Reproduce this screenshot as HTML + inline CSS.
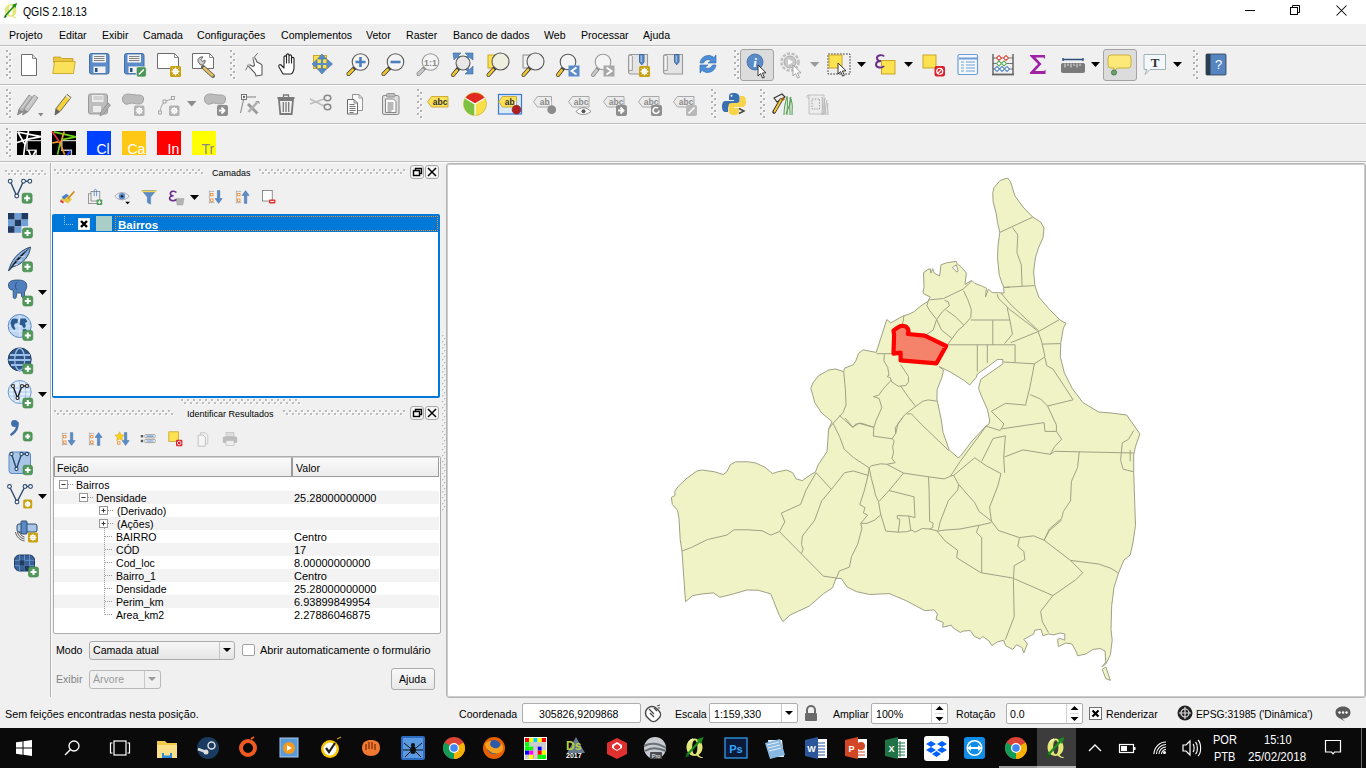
<!DOCTYPE html>
<html><head><meta charset="utf-8">
<style>
*{box-sizing:border-box}
html,body{margin:0;padding:0}
body{width:1366px;height:768px;overflow:hidden;position:relative;background:#f0f0f0;font-family:"Liberation Sans",sans-serif;font-size:11px;color:#000}
.a{position:absolute}
.t{position:absolute;white-space:pre;line-height:13px;font-size:11.5px;transform:scaleX(0.92);transform-origin:0 0}
.u{position:absolute;white-space:pre;line-height:13px}
</style></head><body>
<div class="a" style="left:0px;top:0px;width:1366px;height:24px;background:#fff"></div>
<svg class="a" style="left:3px;top:3px" width="16" height="16" viewBox="0 0 22 22"><path fill-rule="evenodd" d="M10.5 1.5c-4.5 0-8 3.8-8 8.7s3.5 8.7 8 8.7 8-3.8 8-8.7-3.5-8.7-8-8.7zM10.8 3.2c-1.6 0-2.6 3-2.6 7s1 7 2.6 7 2.6-3 2.6-7-1-7-2.6-7z" fill="#e2e676"/><path d="M12 17.5c1.5 2.5 4 3.8 6.5 3.5l.3-1c-2 .2-3.5-.8-4.5-2.8z" fill="#e2e676"/><path d="M4.5 6c.8-2 2.5-3.5 4.5-4" stroke="#f6f8c0" stroke-width="1.3" fill="none"/><path d="M3 18L16 3.5" stroke="#1c8c1c" stroke-width="2.2"/><path d="M19.5 0L12.5 2.5 17 7z" fill="#1c8c1c"/><path d="M1 20.5l4.5-1.2-2.8-2.6z" fill="#135a13"/></svg>
<div class="t" style="left:23px;top:5px;font-size:12px;line-height:14px;transform:scaleX(0.87)">QGIS 2.18.13</div>
<svg class="a" style="left:1244px;top:4px" width="14" height="14" viewBox="0 0 14 14" ><path d="M1 6.5h10" stroke="#000" stroke-width="1"/></svg>
<svg class="a" style="left:1289px;top:4px" width="14" height="14" viewBox="0 0 14 14" ><rect x="1.5" y="3.5" width="7" height="7" fill="none" stroke="#000"/><path d="M3.5 3.5v-2h7v7h-2" fill="none" stroke="#000"/></svg>
<svg class="a" style="left:1335px;top:4px" width="14" height="14" viewBox="0 0 14 14" ><path d="M1.5 1.5l10 10M11.5 1.5l-10 10" stroke="#000" stroke-width="1.05"/></svg>
<div class="t" style="left:9px;top:29px;">Projeto</div>
<div class="t" style="left:59px;top:29px;">Editar</div>
<div class="t" style="left:102px;top:29px;">Exibir</div>
<div class="t" style="left:143px;top:29px;">Camada</div>
<div class="t" style="left:197px;top:29px;">Configurações</div>
<div class="t" style="left:281px;top:29px;">Complementos</div>
<div class="t" style="left:366px;top:29px;">Vetor</div>
<div class="t" style="left:406px;top:29px;">Raster</div>
<div class="t" style="left:453px;top:29px;">Banco de dados</div>
<div class="t" style="left:544px;top:29px;">Web</div>
<div class="t" style="left:581px;top:29px;">Processar</div>
<div class="t" style="left:643px;top:29px;">Ajuda</div>
<div class="a" style="left:0px;top:45px;width:1366px;height:1px;background:#bdbdbd"></div>
<div class="a" style="left:0px;top:46px;width:1366px;height:1px;background:#fcfcfc"></div>
<div class="a" style="left:0px;top:84px;width:1366px;height:1px;background:#bdbdbd"></div>
<div class="a" style="left:0px;top:85px;width:1366px;height:1px;background:#fcfcfc"></div>
<div class="a" style="left:0px;top:123px;width:1366px;height:1px;background:#bdbdbd"></div>
<div class="a" style="left:0px;top:124px;width:1366px;height:1px;background:#fcfcfc"></div>
<div class="a" style="left:0px;top:161px;width:1366px;height:1px;background:#bdbdbd"></div>
<div class="a" style="left:0px;top:162px;width:1366px;height:1px;background:#fcfcfc"></div>
<svg class="a" style="left:6px;top:50px" width="7" height="32" viewBox="0 0 7 32" ><rect x="1" y="1" width="2" height="2" fill="#fdfdfd"/><rect x="0" y="0" width="2" height="2" fill="#b2b2b2"/><rect x="4" y="4" width="2" height="2" fill="#fdfdfd"/><rect x="3" y="3" width="2" height="2" fill="#b2b2b2"/><rect x="1" y="7" width="2" height="2" fill="#fdfdfd"/><rect x="0" y="6" width="2" height="2" fill="#b2b2b2"/><rect x="4" y="10" width="2" height="2" fill="#fdfdfd"/><rect x="3" y="9" width="2" height="2" fill="#b2b2b2"/><rect x="1" y="13" width="2" height="2" fill="#fdfdfd"/><rect x="0" y="12" width="2" height="2" fill="#b2b2b2"/><rect x="4" y="16" width="2" height="2" fill="#fdfdfd"/><rect x="3" y="15" width="2" height="2" fill="#b2b2b2"/><rect x="1" y="19" width="2" height="2" fill="#fdfdfd"/><rect x="0" y="18" width="2" height="2" fill="#b2b2b2"/><rect x="4" y="22" width="2" height="2" fill="#fdfdfd"/><rect x="3" y="21" width="2" height="2" fill="#b2b2b2"/><rect x="1" y="25" width="2" height="2" fill="#fdfdfd"/><rect x="0" y="24" width="2" height="2" fill="#b2b2b2"/><rect x="4" y="28" width="2" height="2" fill="#fdfdfd"/><rect x="3" y="27" width="2" height="2" fill="#b2b2b2"/></svg>
<svg class="a" style="left:230px;top:50px" width="7" height="32" viewBox="0 0 7 32" ><rect x="1" y="1" width="2" height="2" fill="#fdfdfd"/><rect x="0" y="0" width="2" height="2" fill="#b2b2b2"/><rect x="4" y="4" width="2" height="2" fill="#fdfdfd"/><rect x="3" y="3" width="2" height="2" fill="#b2b2b2"/><rect x="1" y="7" width="2" height="2" fill="#fdfdfd"/><rect x="0" y="6" width="2" height="2" fill="#b2b2b2"/><rect x="4" y="10" width="2" height="2" fill="#fdfdfd"/><rect x="3" y="9" width="2" height="2" fill="#b2b2b2"/><rect x="1" y="13" width="2" height="2" fill="#fdfdfd"/><rect x="0" y="12" width="2" height="2" fill="#b2b2b2"/><rect x="4" y="16" width="2" height="2" fill="#fdfdfd"/><rect x="3" y="15" width="2" height="2" fill="#b2b2b2"/><rect x="1" y="19" width="2" height="2" fill="#fdfdfd"/><rect x="0" y="18" width="2" height="2" fill="#b2b2b2"/><rect x="4" y="22" width="2" height="2" fill="#fdfdfd"/><rect x="3" y="21" width="2" height="2" fill="#b2b2b2"/><rect x="1" y="25" width="2" height="2" fill="#fdfdfd"/><rect x="0" y="24" width="2" height="2" fill="#b2b2b2"/><rect x="4" y="28" width="2" height="2" fill="#fdfdfd"/><rect x="3" y="27" width="2" height="2" fill="#b2b2b2"/></svg>
<svg class="a" style="left:734px;top:50px" width="7" height="32" viewBox="0 0 7 32" ><rect x="1" y="1" width="2" height="2" fill="#fdfdfd"/><rect x="0" y="0" width="2" height="2" fill="#b2b2b2"/><rect x="4" y="4" width="2" height="2" fill="#fdfdfd"/><rect x="3" y="3" width="2" height="2" fill="#b2b2b2"/><rect x="1" y="7" width="2" height="2" fill="#fdfdfd"/><rect x="0" y="6" width="2" height="2" fill="#b2b2b2"/><rect x="4" y="10" width="2" height="2" fill="#fdfdfd"/><rect x="3" y="9" width="2" height="2" fill="#b2b2b2"/><rect x="1" y="13" width="2" height="2" fill="#fdfdfd"/><rect x="0" y="12" width="2" height="2" fill="#b2b2b2"/><rect x="4" y="16" width="2" height="2" fill="#fdfdfd"/><rect x="3" y="15" width="2" height="2" fill="#b2b2b2"/><rect x="1" y="19" width="2" height="2" fill="#fdfdfd"/><rect x="0" y="18" width="2" height="2" fill="#b2b2b2"/><rect x="4" y="22" width="2" height="2" fill="#fdfdfd"/><rect x="3" y="21" width="2" height="2" fill="#b2b2b2"/><rect x="1" y="25" width="2" height="2" fill="#fdfdfd"/><rect x="0" y="24" width="2" height="2" fill="#b2b2b2"/><rect x="4" y="28" width="2" height="2" fill="#fdfdfd"/><rect x="3" y="27" width="2" height="2" fill="#b2b2b2"/></svg>
<svg class="a" style="left:1193px;top:50px" width="7" height="32" viewBox="0 0 7 32" ><rect x="1" y="1" width="2" height="2" fill="#fdfdfd"/><rect x="0" y="0" width="2" height="2" fill="#b2b2b2"/><rect x="4" y="4" width="2" height="2" fill="#fdfdfd"/><rect x="3" y="3" width="2" height="2" fill="#b2b2b2"/><rect x="1" y="7" width="2" height="2" fill="#fdfdfd"/><rect x="0" y="6" width="2" height="2" fill="#b2b2b2"/><rect x="4" y="10" width="2" height="2" fill="#fdfdfd"/><rect x="3" y="9" width="2" height="2" fill="#b2b2b2"/><rect x="1" y="13" width="2" height="2" fill="#fdfdfd"/><rect x="0" y="12" width="2" height="2" fill="#b2b2b2"/><rect x="4" y="16" width="2" height="2" fill="#fdfdfd"/><rect x="3" y="15" width="2" height="2" fill="#b2b2b2"/><rect x="1" y="19" width="2" height="2" fill="#fdfdfd"/><rect x="0" y="18" width="2" height="2" fill="#b2b2b2"/><rect x="4" y="22" width="2" height="2" fill="#fdfdfd"/><rect x="3" y="21" width="2" height="2" fill="#b2b2b2"/><rect x="1" y="25" width="2" height="2" fill="#fdfdfd"/><rect x="0" y="24" width="2" height="2" fill="#b2b2b2"/><rect x="4" y="28" width="2" height="2" fill="#fdfdfd"/><rect x="3" y="27" width="2" height="2" fill="#b2b2b2"/></svg>
<svg class="a" style="left:6px;top:89px" width="7" height="32" viewBox="0 0 7 32" ><rect x="1" y="1" width="2" height="2" fill="#fdfdfd"/><rect x="0" y="0" width="2" height="2" fill="#b2b2b2"/><rect x="4" y="4" width="2" height="2" fill="#fdfdfd"/><rect x="3" y="3" width="2" height="2" fill="#b2b2b2"/><rect x="1" y="7" width="2" height="2" fill="#fdfdfd"/><rect x="0" y="6" width="2" height="2" fill="#b2b2b2"/><rect x="4" y="10" width="2" height="2" fill="#fdfdfd"/><rect x="3" y="9" width="2" height="2" fill="#b2b2b2"/><rect x="1" y="13" width="2" height="2" fill="#fdfdfd"/><rect x="0" y="12" width="2" height="2" fill="#b2b2b2"/><rect x="4" y="16" width="2" height="2" fill="#fdfdfd"/><rect x="3" y="15" width="2" height="2" fill="#b2b2b2"/><rect x="1" y="19" width="2" height="2" fill="#fdfdfd"/><rect x="0" y="18" width="2" height="2" fill="#b2b2b2"/><rect x="4" y="22" width="2" height="2" fill="#fdfdfd"/><rect x="3" y="21" width="2" height="2" fill="#b2b2b2"/><rect x="1" y="25" width="2" height="2" fill="#fdfdfd"/><rect x="0" y="24" width="2" height="2" fill="#b2b2b2"/><rect x="4" y="28" width="2" height="2" fill="#fdfdfd"/><rect x="3" y="27" width="2" height="2" fill="#b2b2b2"/></svg>
<svg class="a" style="left:417px;top:89px" width="7" height="32" viewBox="0 0 7 32" ><rect x="1" y="1" width="2" height="2" fill="#fdfdfd"/><rect x="0" y="0" width="2" height="2" fill="#b2b2b2"/><rect x="4" y="4" width="2" height="2" fill="#fdfdfd"/><rect x="3" y="3" width="2" height="2" fill="#b2b2b2"/><rect x="1" y="7" width="2" height="2" fill="#fdfdfd"/><rect x="0" y="6" width="2" height="2" fill="#b2b2b2"/><rect x="4" y="10" width="2" height="2" fill="#fdfdfd"/><rect x="3" y="9" width="2" height="2" fill="#b2b2b2"/><rect x="1" y="13" width="2" height="2" fill="#fdfdfd"/><rect x="0" y="12" width="2" height="2" fill="#b2b2b2"/><rect x="4" y="16" width="2" height="2" fill="#fdfdfd"/><rect x="3" y="15" width="2" height="2" fill="#b2b2b2"/><rect x="1" y="19" width="2" height="2" fill="#fdfdfd"/><rect x="0" y="18" width="2" height="2" fill="#b2b2b2"/><rect x="4" y="22" width="2" height="2" fill="#fdfdfd"/><rect x="3" y="21" width="2" height="2" fill="#b2b2b2"/><rect x="1" y="25" width="2" height="2" fill="#fdfdfd"/><rect x="0" y="24" width="2" height="2" fill="#b2b2b2"/><rect x="4" y="28" width="2" height="2" fill="#fdfdfd"/><rect x="3" y="27" width="2" height="2" fill="#b2b2b2"/></svg>
<svg class="a" style="left:711px;top:89px" width="7" height="32" viewBox="0 0 7 32" ><rect x="1" y="1" width="2" height="2" fill="#fdfdfd"/><rect x="0" y="0" width="2" height="2" fill="#b2b2b2"/><rect x="4" y="4" width="2" height="2" fill="#fdfdfd"/><rect x="3" y="3" width="2" height="2" fill="#b2b2b2"/><rect x="1" y="7" width="2" height="2" fill="#fdfdfd"/><rect x="0" y="6" width="2" height="2" fill="#b2b2b2"/><rect x="4" y="10" width="2" height="2" fill="#fdfdfd"/><rect x="3" y="9" width="2" height="2" fill="#b2b2b2"/><rect x="1" y="13" width="2" height="2" fill="#fdfdfd"/><rect x="0" y="12" width="2" height="2" fill="#b2b2b2"/><rect x="4" y="16" width="2" height="2" fill="#fdfdfd"/><rect x="3" y="15" width="2" height="2" fill="#b2b2b2"/><rect x="1" y="19" width="2" height="2" fill="#fdfdfd"/><rect x="0" y="18" width="2" height="2" fill="#b2b2b2"/><rect x="4" y="22" width="2" height="2" fill="#fdfdfd"/><rect x="3" y="21" width="2" height="2" fill="#b2b2b2"/><rect x="1" y="25" width="2" height="2" fill="#fdfdfd"/><rect x="0" y="24" width="2" height="2" fill="#b2b2b2"/><rect x="4" y="28" width="2" height="2" fill="#fdfdfd"/><rect x="3" y="27" width="2" height="2" fill="#b2b2b2"/></svg>
<svg class="a" style="left:760px;top:89px" width="7" height="32" viewBox="0 0 7 32" ><rect x="1" y="1" width="2" height="2" fill="#fdfdfd"/><rect x="0" y="0" width="2" height="2" fill="#b2b2b2"/><rect x="4" y="4" width="2" height="2" fill="#fdfdfd"/><rect x="3" y="3" width="2" height="2" fill="#b2b2b2"/><rect x="1" y="7" width="2" height="2" fill="#fdfdfd"/><rect x="0" y="6" width="2" height="2" fill="#b2b2b2"/><rect x="4" y="10" width="2" height="2" fill="#fdfdfd"/><rect x="3" y="9" width="2" height="2" fill="#b2b2b2"/><rect x="1" y="13" width="2" height="2" fill="#fdfdfd"/><rect x="0" y="12" width="2" height="2" fill="#b2b2b2"/><rect x="4" y="16" width="2" height="2" fill="#fdfdfd"/><rect x="3" y="15" width="2" height="2" fill="#b2b2b2"/><rect x="1" y="19" width="2" height="2" fill="#fdfdfd"/><rect x="0" y="18" width="2" height="2" fill="#b2b2b2"/><rect x="4" y="22" width="2" height="2" fill="#fdfdfd"/><rect x="3" y="21" width="2" height="2" fill="#b2b2b2"/><rect x="1" y="25" width="2" height="2" fill="#fdfdfd"/><rect x="0" y="24" width="2" height="2" fill="#b2b2b2"/><rect x="4" y="28" width="2" height="2" fill="#fdfdfd"/><rect x="3" y="27" width="2" height="2" fill="#b2b2b2"/></svg>
<svg class="a" style="left:6px;top:128px" width="7" height="32" viewBox="0 0 7 32" ><rect x="1" y="1" width="2" height="2" fill="#fdfdfd"/><rect x="0" y="0" width="2" height="2" fill="#b2b2b2"/><rect x="4" y="4" width="2" height="2" fill="#fdfdfd"/><rect x="3" y="3" width="2" height="2" fill="#b2b2b2"/><rect x="1" y="7" width="2" height="2" fill="#fdfdfd"/><rect x="0" y="6" width="2" height="2" fill="#b2b2b2"/><rect x="4" y="10" width="2" height="2" fill="#fdfdfd"/><rect x="3" y="9" width="2" height="2" fill="#b2b2b2"/><rect x="1" y="13" width="2" height="2" fill="#fdfdfd"/><rect x="0" y="12" width="2" height="2" fill="#b2b2b2"/><rect x="4" y="16" width="2" height="2" fill="#fdfdfd"/><rect x="3" y="15" width="2" height="2" fill="#b2b2b2"/><rect x="1" y="19" width="2" height="2" fill="#fdfdfd"/><rect x="0" y="18" width="2" height="2" fill="#b2b2b2"/><rect x="4" y="22" width="2" height="2" fill="#fdfdfd"/><rect x="3" y="21" width="2" height="2" fill="#b2b2b2"/><rect x="1" y="25" width="2" height="2" fill="#fdfdfd"/><rect x="0" y="24" width="2" height="2" fill="#b2b2b2"/><rect x="4" y="28" width="2" height="2" fill="#fdfdfd"/><rect x="3" y="27" width="2" height="2" fill="#b2b2b2"/></svg>
<svg class="a" style="left:17px;top:52px;overflow:visible" width="24" height="24" viewBox="0 0 24 24"><path d="M4.5 2.5H15.5L19.5 6.5V23.5H4.5Z" fill="#fff" stroke="#6e6e6e"/><path d="M15.5 2.5V6.5H19.5" fill="#ddd" stroke="#6e6e6e" stroke-width="0.8"/></svg>
<svg class="a" style="left:52px;top:52px;overflow:visible" width="24" height="24" viewBox="0 0 24 24"><path d="M1.5 5h7l1.5 1.5H21v4H1.5z" fill="#e8c83a" stroke="#c09a20" stroke-width="0.8"/><path d="M0.8 21.5L2.5 9.5H23.2L21.5 21.5z" fill="#fbe05a" stroke="#c9a52a" stroke-width="0.9"/></svg>
<svg class="a" style="left:87px;top:52px;overflow:visible" width="24" height="24" viewBox="0 0 24 24"><rect x="2.5" y="1.5" width="19.5" height="20.5" rx="2" fill="#5b8cc9" stroke="#3f6ea8"/><rect x="5.5" y="2.5" width="13.5" height="8" fill="#f2f2f2"/><path d="M7 4.5h10.5M7 6.5h10.5M7 8.5h10.5" stroke="#666" stroke-width="0.8"/><rect x="6.5" y="14.5" width="12" height="6.5" fill="#f0f0f0"/><rect x="8" y="16" width="2.5" height="4" fill="#2c4f86"/></svg>
<svg class="a" style="left:122px;top:52px;overflow:visible" width="24" height="24" viewBox="0 0 24 24"><rect x="2.5" y="1.5" width="19.5" height="20.5" rx="2" fill="#5b8cc9" stroke="#3f6ea8"/><rect x="5.5" y="2.5" width="13.5" height="8" fill="#f2f2f2"/><path d="M7 4.5h10.5M7 6.5h10.5M7 8.5h10.5" stroke="#666" stroke-width="0.8"/><rect x="6.5" y="14.5" width="12" height="6.5" fill="#f0f0f0"/><rect x="8" y="16" width="2.5" height="4" fill="#2c4f86"/><rect x="14.3" y="14.8" width="10" height="10.2" rx="2" fill="#4c9455" stroke="#fff" stroke-width="0.6"/><path d="M16.8 22.5l5-5" stroke="#fff" stroke-width="1.6"/></svg>
<svg class="a" style="left:157px;top:52px;overflow:visible" width="24" height="24" viewBox="0 0 24 24"><path d="M0.5 1.5H17.5L21.5 5.5V16.5H0.5Z" fill="#fff" stroke="#6e6e6e"/><path d="M17.5 1.5V5.5H21.5" fill="none" stroke="#6e6e6e" stroke-width="0.8"/><rect x="13" y="14" width="11" height="11" rx="1.5" fill="#c9a214"/><circle cx="18.5" cy="19.5" r="2.42" fill="none" stroke="#fff" stroke-width="1.2"/><path d="M18.5 15.5v8M14.5 19.5h8M15.5 16.5l6 6M21.5 16.5l-6 6" stroke="#fff" stroke-width="0.9"/></svg>
<svg class="a" style="left:192px;top:52px;overflow:visible" width="24" height="24" viewBox="0 0 24 24"><path d="M0.5 1.5H17.5L21.5 5.5V16.5H0.5Z" fill="#fff" stroke="#6e6e6e"/><path d="M17.5 1.5V5.5H21.5" fill="none" stroke="#6e6e6e" stroke-width="0.8"/><path d="M11 15L21 24" stroke="#5a5a5a" stroke-width="4" stroke-linecap="round"/><path d="M12 16L20.5 23.5" stroke="#e8c060" stroke-width="2.4" stroke-linecap="round"/><path d="M6 9.5a4 4 0 0 1 5-4.5l-2 2.5 1.5 2 2.5-1.5a4 4 0 0 1-4.5 5z" fill="#d0d0d0" stroke="#555" stroke-width="0.9"/></svg>
<svg class="a" style="left:242px;top:52px;overflow:visible" width="24" height="24" viewBox="0 0 24 24"><path d="M20 23V13.2L18.3 11.7 14.8 9.7 14 7.8 12.5 5.2 11 6 12.5 13.6 11 14.4 7 12.5 5.8 13.6 7.4 15.2 13.2 21.4 14 24z" fill="#fff" stroke="#5a5a5a" stroke-width="1.1" stroke-linejoin="round"/><path d="M15.6 1.1L11.7 5.8M6.6 12.8L3.5 18.3" stroke="#777" stroke-width="1"/><circle cx="11.7" cy="6.2" r="1.3" fill="#bbb"/><circle cx="6.8" cy="13" r="1.3" fill="#bbb"/></svg>
<svg class="a" style="left:276px;top:52px;overflow:visible" width="24" height="24" viewBox="0 0 24 24"><path d="M7 22l-4-7c-1-2 1-3 2-2l3 3V5c0-1.5 2.5-1.5 2.5 0v6V3c0-1.5 2.5-1.5 2.5 0v8V4c0-1.5 2.5-1.5 2.5 0v7V6.5c0-1.5 2.5-1.5 2.5 0V16c0 3-2 6-3 6z" fill="#fff" stroke="#222" stroke-width="1.1" stroke-linejoin="round"/></svg>
<svg class="a" style="left:311px;top:52px;overflow:visible" width="24" height="24" viewBox="0 0 24 24"><rect x="2.5" y="3.5" width="13" height="13" fill="#fce24e" stroke="#c9a52a"/><path d="M11 7v10M6 12h10" stroke="#5a8cc8" stroke-width="2.2"/><path d="M11 2l-4.5 5h9zM11 22l-4.5-5h9zM1 12l5-4.5v9zM21.5 12l-5-4.5v9z" fill="#5a8cc8" stroke="#3d6ea8" stroke-width="0.6"/></svg>
<svg class="a" style="left:346px;top:52px;overflow:visible" width="24" height="24" viewBox="0 0 24 24"><path d="M2.5 22L8.631013716151655 15.868986283848345" stroke="#333" stroke-width="4" stroke-linecap="round"/><path d="M2.5 22L6.863246763185286 17.636753236814712" stroke="#f2c832" stroke-width="2.6" stroke-linecap="round"/><circle cx="14.5" cy="10" r="8.3" fill="#f4f4f4" stroke="#5a5a5a" stroke-width="1.1"/><path d="M14.5 5v10M9.5 10h10" stroke="#4d7fbf" stroke-width="2.6"/></svg>
<svg class="a" style="left:381px;top:52px;overflow:visible" width="24" height="24" viewBox="0 0 24 24"><path d="M2.5 22L8.631013716151655 15.868986283848345" stroke="#333" stroke-width="4" stroke-linecap="round"/><path d="M2.5 22L6.863246763185286 17.636753236814712" stroke="#f2c832" stroke-width="2.6" stroke-linecap="round"/><circle cx="14.5" cy="10" r="8.3" fill="#f4f4f4" stroke="#5a5a5a" stroke-width="1.1"/><path d="M9.5 10h10" stroke="#4d7fbf" stroke-width="2.6"/></svg>
<svg class="a" style="left:416px;top:52px;overflow:visible" width="24" height="24" viewBox="0 0 24 24"><path d="M2.5 22L8.631013716151655 15.868986283848345" stroke="#888" stroke-width="4" stroke-linecap="round"/><path d="M2.5 22L6.863246763185286 17.636753236814712" stroke="#c8c8c8" stroke-width="2.6" stroke-linecap="round"/><circle cx="14.5" cy="10" r="8.3" fill="#f4f4f4" stroke="#9a9a9a" stroke-width="1.1"/><text x="14.5" y="13.5" font-family="Liberation Sans" font-weight="bold" font-size="9" fill="#8a8a8a" text-anchor="middle">1:1</text></svg>
<svg class="a" style="left:451px;top:52px;overflow:visible" width="24" height="24" viewBox="0 0 24 24"><path d="M2 1h8l-2.5 2.5 3 3-2 2-3-3L3 8z M22 1h-8l2.5 2.5-3 3 2 2 3-3L22 8z M22 22h-8l2.5-2.5-3-3 2-2 3 3L22 14z" fill="#5a8cc8" stroke="#3d6ea8" stroke-width="0.6"/><path d="M2 23L7.51870920234864 16.37754895718163" stroke="#333" stroke-width="4" stroke-linecap="round"/><path d="M2 23L5.91824820318744 18.29810215617507" stroke="#f2c832" stroke-width="2.6" stroke-linecap="round"/><circle cx="12" cy="11" r="7" fill="#e8e8e8" stroke="#5a5a5a" stroke-width="1.1"/></svg>
<svg class="a" style="left:486px;top:52px;overflow:visible" width="24" height="24" viewBox="0 0 24 24"><rect x="2" y="3" width="8" height="13" fill="#fce24e" stroke="#c9a52a"/><path d="M2.5 23L8.852907369945683 15.852979208811108" stroke="#333" stroke-width="4" stroke-linecap="round"/><path d="M2.5 23L7.1919977728708835 17.721502505520256" stroke="#f2c832" stroke-width="2.6" stroke-linecap="round"/><circle cx="14.5" cy="9.5" r="8.5" fill="#efefe0" stroke="#5a5a5a" stroke-width="1.1"/></svg>
<svg class="a" style="left:521px;top:52px;overflow:visible" width="24" height="24" viewBox="0 0 24 24"><rect x="2" y="3" width="8" height="13" fill="#f0f0f0" stroke="#8a8a8a"/><path d="M2.5 23L8.852907369945683 15.852979208811108" stroke="#333" stroke-width="4" stroke-linecap="round"/><path d="M2.5 23L7.1919977728708835 17.721502505520256" stroke="#f2c832" stroke-width="2.6" stroke-linecap="round"/><circle cx="14.5" cy="9.5" r="8.5" fill="#f0f0f0" stroke="#5a5a5a" stroke-width="1.1"/></svg>
<svg class="a" style="left:556px;top:52px;overflow:visible" width="24" height="24" viewBox="0 0 24 24"><path d="M2 23L7.2442560653724 16.18246711501588" stroke="#333" stroke-width="4" stroke-linecap="round"/><path d="M2 23L5.719979163248169 18.164027087777377" stroke="#f2c832" stroke-width="2.6" stroke-linecap="round"/><circle cx="12" cy="10" r="7.8" fill="#f4f4f4" stroke="#5a5a5a" stroke-width="1.1"/><rect x="12.5" y="13.5" width="11" height="11" fill="#5b8cc9"/><path d="M20.5 15.5l-5 3.5 5 3.5" stroke="#fff" stroke-width="1.8" fill="none"/></svg>
<svg class="a" style="left:591px;top:52px;overflow:visible" width="24" height="24" viewBox="0 0 24 24"><path d="M2 23L7.2442560653724 16.18246711501588" stroke="#888" stroke-width="4" stroke-linecap="round"/><path d="M2 23L5.719979163248169 18.164027087777377" stroke="#c8c8c8" stroke-width="2.6" stroke-linecap="round"/><circle cx="12" cy="10" r="7.8" fill="#f4f4f4" stroke="#9a9a9a" stroke-width="1.1"/><rect x="12.5" y="13.5" width="11" height="11" fill="#a8a8a8"/><path d="M15.5 15.5l5 3.5-5 3.5" stroke="#fff" stroke-width="1.8" fill="none"/></svg>
<svg class="a" style="left:626px;top:52px;overflow:visible" width="24" height="24" viewBox="0 0 24 24"><path d="M4.5 2.5H21.5V22H5C3.5 22 2.5 21 2.5 19.5V4.5C2.5 3.3 3.3 2.5 4.5 2.5z" fill="#e4e4e4" stroke="#999" stroke-width="1.1"/><path d="M2.8 18.5V4.3C2.8 3 6.3 3 6.3 4.3V18.5" fill="#f6f6f6" stroke="#999" stroke-width="1"/><path d="M2.8 19.5C2.8 18.3 4 18.2 6.3 18.5" fill="none" stroke="#999" stroke-width="1"/><path d="M13.5 2.5H18V10L15.75 12.8 13.5 10z" fill="#5b8cc9" stroke="#3a6296" stroke-width="0.9"/><path d="M15.2 3.5V10" stroke="#c8dcf4" stroke-width="0.8"/><rect x="13" y="14" width="11" height="11" rx="1.5" fill="#c9a214"/><circle cx="18.5" cy="19.5" r="2.42" fill="none" stroke="#fff" stroke-width="1.2"/><path d="M18.5 15.5v8M14.5 19.5h8M15.5 16.5l6 6M21.5 16.5l-6 6" stroke="#fff" stroke-width="0.9"/></svg>
<svg class="a" style="left:661px;top:52px;overflow:visible" width="24" height="24" viewBox="0 0 24 24"><path d="M4.5 2.5H21.5V22H5C3.5 22 2.5 21 2.5 19.5V4.5C2.5 3.3 3.3 2.5 4.5 2.5z" fill="#e4e4e4" stroke="#999" stroke-width="1.1"/><path d="M2.8 18.5V4.3C2.8 3 6.3 3 6.3 4.3V18.5" fill="#f6f6f6" stroke="#999" stroke-width="1"/><path d="M2.8 19.5C2.8 18.3 4 18.2 6.3 18.5" fill="none" stroke="#999" stroke-width="1"/><path d="M13.5 2.5H18V10L15.75 12.8 13.5 10z" fill="#5b8cc9" stroke="#3a6296" stroke-width="0.9"/><path d="M15.2 3.5V10" stroke="#c8dcf4" stroke-width="0.8"/></svg>
<svg class="a" style="left:696px;top:52px;overflow:visible" width="24" height="24" viewBox="0 0 24 24"><path d="M4 11a8.5 8.5 0 0 1 14-5.5l2-2.5v8h-8l3-2.5a5 5 0 0 0-7.5 2.5z" fill="#4d8fd6" stroke="#2f6ab0" stroke-width="0.6"/><path d="M20 13a8.5 8.5 0 0 1-14 5.5l-2 2.5v-8h8l-3 2.5a5 5 0 0 0 7.5-2.5z" fill="#4d8fd6" stroke="#2f6ab0" stroke-width="0.6"/></svg>
<div class="a" style="left:740px;top:49px;width:34px;height:32px;background:#dcdcdc;border:1px solid #a3a3a3;border-radius:3px"></div>
<svg class="a" style="left:745px;top:52px;overflow:visible" width="24" height="24" viewBox="0 0 24 24"><circle cx="10" cy="10" r="8" fill="#5a8cc8" stroke="#3d6ea8" stroke-width="0.8"/><text x="10" y="15" font-family="Liberation Serif" font-style="italic" font-weight="bold" font-size="13" fill="#fff" text-anchor="middle">i</text><path d="M13 13l0 11 2.6-2.4 2 4.5 1.8-.8-2-4.3 3.6-.2z" fill="#fff" stroke="#222" stroke-width="0.9" stroke-linejoin="round"/></svg>
<svg class="a" style="left:780px;top:52px;overflow:visible" width="24" height="24" viewBox="0 0 24 24"><circle cx="10" cy="10" r="8.5" fill="none" stroke="#bdbdbd" stroke-width="2.5" stroke-dasharray="3 1.6"/><circle cx="10" cy="10" r="6" fill="#c8c8c8" stroke="#aaa"/><path d="M8 7v6l5-3z" fill="#fff"/><path d="M13 13l0 11 2.6-2.4 2 4.5 1.8-.8-2-4.3 3.6-.2z" fill="#fff" stroke="#9a9a9a" stroke-width="0.9" stroke-linejoin="round"/></svg>
<svg class="a" style="left:810px;top:62px" width="10" height="5" viewBox="0 0 10 5" ><path d="M0 0h9.5l-4.75 5z" fill="#9a9a9a"/></svg>
<svg class="a" style="left:827px;top:52px;overflow:visible" width="24" height="24" viewBox="0 0 24 24"><rect x="1" y="2" width="22" height="20" fill="none" stroke="#333" stroke-width="0.9" stroke-dasharray="1.8 1.2"/><rect x="2" y="3" width="13" height="13" fill="#fce24e" stroke="#c9a52a"/><path d="M11 11l0 11 2.6-2.4 2 4.5 1.8-.8-2-4.3 3.6-.2z" fill="#fff" stroke="#222" stroke-width="0.9" stroke-linejoin="round"/></svg>
<svg class="a" style="left:857px;top:62px" width="9" height="5" viewBox="0 0 9 5" ><path d="M0 0h9l-4.5 5z" fill="#000"/></svg>
<svg class="a" style="left:873px;top:52px;overflow:visible" width="24" height="24" viewBox="0 0 24 24"><rect x="8.5" y="8.5" width="13.5" height="13.5" fill="#fce24e" stroke="#c9a52a"/><path d="M11 4.5c-1-2-7-2-7 1.5 0 2 2 3 4 3-3 0-5 1.5-5 3.5 0 3.5 6 4 8 1.5" fill="none" stroke="#6b2e8a" stroke-width="2"/></svg>
<svg class="a" style="left:904px;top:62px" width="9" height="5" viewBox="0 0 9 5" ><path d="M0 0h9l-4.5 5z" fill="#000"/></svg>
<svg class="a" style="left:922px;top:52px;overflow:visible" width="24" height="24" viewBox="0 0 24 24"><rect x="1" y="3" width="13" height="13" fill="#fce24e" stroke="#c9a52a"/><rect x="12.5" y="14" width="10.5" height="10.5" rx="2" fill="#d9232e"/><circle cx="17.75" cy="19.25" r="3" fill="none" stroke="#fff" stroke-width="1.2"/><path d="M15.6 21.4l4.3-4.3" stroke="#fff" stroke-width="1.2"/></svg>
<svg class="a" style="left:956px;top:52px;overflow:visible" width="24" height="24" viewBox="0 0 24 24"><rect x="2" y="2.5" width="19.5" height="20" rx="1.5" fill="#f4f8fc" stroke="#6d9fd6" stroke-width="1.2"/><path d="M3 6.5h18" stroke="#6d9fd6" stroke-width="2"/><path d="M5 10h3M10 10h9M5 13h3M10 13h9M5 16h3M10 16h9M5 19h3M10 19h9" stroke="#6d9fd6" stroke-width="1.1"/></svg>
<svg class="a" style="left:991px;top:52px;overflow:visible" width="24" height="24" viewBox="0 0 24 24"><path d="M2 2v20M22 2v20" stroke="#555" stroke-width="1.3"/><path d="M1 22.5h22" stroke="#666" stroke-width="1.8"/><path d="M2 6h20M2 11.5h20M2 17h20" stroke="#555" stroke-width="0.8"/><path d="M5.5 6l2.5-2.5 2.5 2.5-2.5 2.5z" fill="#fff" stroke="#e05040" stroke-width="1.1"/><path d="M12.5 6l2.5-2.5 2.5 2.5-2.5 2.5z" fill="#fff" stroke="#e05040" stroke-width="1.1"/><path d="M5.5 11.5l2.5-2.5 2.5 2.5-2.5 2.5z" fill="#fff" stroke="#60b060" stroke-width="1.1"/><path d="M10.5 11.5l2.5-2.5 2.5 2.5-2.5 2.5z" fill="#fff" stroke="#60b060" stroke-width="1.1"/><path d="M3.5 17l2.5-2.5 2.5 2.5-2.5 2.5z" fill="#fff" stroke="#5a8cc8" stroke-width="1.1"/><path d="M8.5 17l2.5-2.5 2.5 2.5-2.5 2.5z" fill="#fff" stroke="#5a8cc8" stroke-width="1.1"/><path d="M13.5 17l2.5-2.5 2.5 2.5-2.5 2.5z" fill="#fff" stroke="#5a8cc8" stroke-width="1.1"/></svg>
<svg class="a" style="left:1026px;top:52px;overflow:visible" width="24" height="24" viewBox="0 0 24 24"><path d="M4 3h15v4l-1.5-1.5H9.5l6 6.5-6.5 7H18l1.5-1.5V22H4v-1.5l8-8.5-8-8z" fill="#a020a8"/></svg>
<svg class="a" style="left:1061px;top:52px;overflow:visible" width="24" height="24" viewBox="0 0 24 24"><path d="M1.5 7.5h21M2 6v3M22 6v3" stroke="#2d4f77" stroke-width="1.4"/><rect x="0.5" y="11.5" width="23" height="9" rx="1" fill="#7a7a7a" stroke="#555" stroke-width="0.6"/><path d="M4 11.5v4M7 11.5v2.5M10 11.5v4M13 11.5v2.5M16 11.5v4M19 11.5v2.5" stroke="#fff" stroke-width="0.8"/></svg>
<svg class="a" style="left:1091px;top:62px" width="9" height="5" viewBox="0 0 9 5" ><path d="M0 0h9l-4.5 5z" fill="#000"/></svg>
<div class="a" style="left:1103px;top:49px;width:34px;height:32px;background:#dcdcdc;border:1px solid #a3a3a3;border-radius:3px"></div>
<svg class="a" style="left:1108px;top:52px;overflow:visible" width="24" height="24" viewBox="0 0 24 24"><path d="M3 3h17a3 3 0 0 1 3 3v7a3 3 0 0 1-3 3H9l-3 4v-4H3a3 3 0 0 1-3-3V6a3 3 0 0 1 3-3z" fill="#fde87a" stroke="#c8aa30" stroke-width="0.9"/><circle cx="6" cy="20.5" r="2.6" fill="#6aa070" stroke="#3f7048" stroke-width="0.8"/></svg>
<svg class="a" style="left:1143px;top:52px;overflow:visible" width="24" height="24" viewBox="0 0 24 24"><path d="M1 2.5h21.5v15H7l-5 5 2-5H1z" fill="#f4f8fc" stroke="#9aa" stroke-width="0.9"/><text x="12" y="14.5" font-family="Liberation Serif" font-weight="bold" font-size="13" fill="#333" text-anchor="middle">T</text></svg>
<svg class="a" style="left:1173px;top:62px" width="9" height="5" viewBox="0 0 9 5" ><path d="M0 0h9l-4.5 5z" fill="#000"/></svg>
<svg class="a" style="left:1204px;top:52px;overflow:visible" width="24" height="24" viewBox="0 0 24 24"><rect x="2" y="2" width="20" height="21" rx="1" fill="#5585c0" stroke="#2a3a4a" stroke-width="0.8"/><rect x="2" y="2" width="4.5" height="21" fill="#2b3d50"/><text x="14.5" y="17" font-family="Liberation Sans" font-size="13" fill="#fff" text-anchor="middle">?</text></svg>
<svg class="a" style="left:17px;top:92px;overflow:visible" width="24" height="24" viewBox="0 0 24 24"><path d="M0.5 23l1.5-6 10-14 4 2.8-10 14z" fill="#b8b8b8" stroke="#8a8a8a" stroke-width="0.8"/><path d="M0.5 23l1.5-6 4 2.8z" fill="#8a8a8a"/><path d="M5 16l9-12.5" stroke="#ddd" stroke-width="0.8"/><path d="M5.5 23l1.5-6 10-14 4 2.8-10 14z" fill="#c4c4c4" stroke="#8a8a8a" stroke-width="0.8"/><path d="M5.5 23l1.5-6 4 2.8z" fill="#8a8a8a"/><path d="M10 16l9-12.5" stroke="#ddd" stroke-width="0.8"/></svg>
<svg class="a" style="left:38px;top:113px" width="6" height="4" viewBox="0 0 6 4" ><path d="M0 0h5.5l-2.75 3.5z" fill="#888"/></svg>
<svg class="a" style="left:51px;top:92px;overflow:visible" width="24" height="24" viewBox="0 0 24 24"><path d="M4 23l1-6.5 11-14 4 3-11 14z" fill="#f3d23a" stroke="#5a5a5a" stroke-width="0.9"/><path d="M4 23l1-6.5 4 3z" fill="#666"/><path d="M15 3.5l4 3" stroke="#eee" stroke-width="1.5"/></svg>
<svg class="a" style="left:87px;top:92px;overflow:visible" width="24" height="24" viewBox="0 0 24 24"><rect x="1.5" y="2" width="19" height="20" rx="2" fill="#bdbdbd" stroke="#9a9a9a"/><rect x="5" y="3" width="11.5" height="7" fill="#ececec"/><path d="M6.5 5h9M6.5 7h9" stroke="#aaa" stroke-width="0.8"/><rect x="6" y="14" width="8" height="6" fill="#ececec"/><path d="M13 24l1-4 7-9 2.5 2-7 9z" fill="#b0b0b0" stroke="#8a8a8a" stroke-width="0.8"/></svg>
<svg class="a" style="left:122px;top:92px;overflow:visible" width="24" height="24" viewBox="0 0 24 24"><path d="M0.5 7c0-4 3-5 6-5 3 0 5 1 8 1 4 0 7 0 7 4s-2 5-5 5-5-1-7-1-4 2-6 1-3-2-3-5z" fill="#bcbcbc" stroke="#9a9a9a" stroke-width="0.9"/><rect x="12" y="13.5" width="10.5" height="10.5" rx="1.5" fill="#b2b2b2"/><circle cx="17.25" cy="18.75" r="2.31" fill="none" stroke="#fff" stroke-width="1.2"/><path d="M17.25 15.0v7.5M13.5 18.75h7.5M14.5 16.0l5.5 5.5M20.0 16.0l-5.5 5.5" stroke="#fff" stroke-width="0.9"/></svg>
<svg class="a" style="left:158px;top:92px;overflow:visible" width="24" height="24" viewBox="0 0 24 24"><path d="M2 21c0-8 5-13 13-14" fill="none" stroke="#aaa" stroke-width="1.1"/><rect x="0.5" y="19" width="3" height="3" fill="#eee" stroke="#999" stroke-width="0.8"/><rect x="5" y="8" width="3" height="3" fill="#eee" stroke="#999" stroke-width="0.8"/><rect x="13.5" y="4.5" width="3" height="3" fill="#eee" stroke="#999" stroke-width="0.8"/><rect x="11" y="13.5" width="10.5" height="10.5" rx="1.5" fill="#b2b2b2"/><circle cx="16.25" cy="18.75" r="2.31" fill="none" stroke="#fff" stroke-width="1.2"/><path d="M16.25 15.0v7.5M12.5 18.75h7.5M13.5 16.0l5.5 5.5M19.0 16.0l-5.5 5.5" stroke="#fff" stroke-width="0.9"/></svg>
<svg class="a" style="left:187px;top:101px" width="10" height="6" viewBox="0 0 10 6" ><path d="M0 0h9.5l-4.75 5.5z" fill="#8a8a8a"/></svg>
<svg class="a" style="left:204px;top:92px;overflow:visible" width="24" height="24" viewBox="0 0 24 24"><path d="M0.5 7c0-4 3-5 6-5 3 0 5 1 8 1 4 0 7 0 7 4s-2 5-5 5-5-1-7-1-4 2-6 1-3-2-3-5z" fill="#bcbcbc" stroke="#9a9a9a" stroke-width="0.9"/><rect x="13" y="13" width="11" height="11" rx="2" fill="#8e8e8e"/><path d="M15 18.5h4.5M17.5 15.5l3 3-3 3" stroke="#fff" stroke-width="1.8" fill="none"/></svg>
<svg class="a" style="left:239px;top:92px;overflow:visible" width="24" height="24" viewBox="0 0 24 24"><rect x="2.5" y="2.5" width="5" height="5" fill="#fff" stroke="#666" stroke-width="0.9"/><circle cx="5" cy="5" r="1.2" fill="#666"/><path d="M8 5h9" stroke="#999" stroke-width="1.3"/><path d="M4.5 8L1.5 21" stroke="#777" stroke-width="0.9"/><path d="M9 12l9.5 9.5" stroke="#9a9a9a" stroke-width="3"/><path d="M18 10.5l-8.5 9.5" stroke="#b0b0b0" stroke-width="2.6"/><path d="M16 9l4 0 1 3z" fill="#999"/></svg>
<svg class="a" style="left:274px;top:92px;overflow:visible" width="24" height="24" viewBox="0 0 24 24"><path d="M3.5 6h17" stroke="#7a7a7a" stroke-width="2"/><path d="M9.5 5V3h5v2" fill="none" stroke="#7a7a7a" stroke-width="1.3"/><path d="M5 8h14l-1.3 14H6.3z" fill="none" stroke="#7a7a7a" stroke-width="1.8"/><path d="M9.3 10v10M12 10v10M14.7 10v10" stroke="#7a7a7a" stroke-width="1.3"/></svg>
<svg class="a" style="left:309px;top:92px;overflow:visible" width="24" height="24" viewBox="0 0 24 24"><path d="M1 7l14 7M1 12l14-5" stroke="#bcbcbc" stroke-width="1.5"/><ellipse cx="18.5" cy="6" rx="3.3" ry="2.7" fill="none" stroke="#888" stroke-width="1.5"/><ellipse cx="18.5" cy="15" rx="3.3" ry="2.7" fill="none" stroke="#888" stroke-width="1.5"/></svg>
<svg class="a" style="left:343px;top:92px;overflow:visible" width="24" height="24" viewBox="0 0 24 24"><path d="M9.5 2.5h6.5l3.5 3.5v12.5h-10z" fill="#f8f8f8" stroke="#8a8a8a" stroke-width="0.9"/><path d="M16 2.5v3.5h3.5" fill="none" stroke="#8a8a8a" stroke-width="0.8"/><path d="M4.5 7.5h6.5l3.5 3.5V22h-10z" fill="#fbfbfb" stroke="#6a6a6a" stroke-width="1"/><path d="M11 7.5V11h3.5" fill="none" stroke="#6a6a6a" stroke-width="0.8"/><path d="M6.5 12.5h5M6.5 14.5h6M6.5 16.5h6M6.5 18.5h6M6.5 20.5h4" stroke="#555" stroke-width="0.8"/></svg>
<svg class="a" style="left:379px;top:92px;overflow:visible" width="24" height="24" viewBox="0 0 24 24"><rect x="3.5" y="3.5" width="16.5" height="19" rx="1.5" fill="#e0e0e0" stroke="#8a8a8a"/><rect x="7.5" y="1.5" width="8.5" height="3.5" rx="1" fill="#bdbdbd" stroke="#8a8a8a" stroke-width="0.8"/><path d="M6.5 7h8l2.5 2.5V20.5h-10.5z" fill="#fbfbfb" stroke="#7a7a7a" stroke-width="0.9"/><path d="M8.5 11h6M8.5 13h6M8.5 15h6M8.5 17h6M8.5 19h4" stroke="#555" stroke-width="0.8"/></svg>
<svg class="a" style="left:427px;top:92px;overflow:visible" width="24" height="24" viewBox="0 0 24 24"><path d="M4.5 4.5h16.5v10.5H4.5L0.5 9.75z" fill="#fbe05a" stroke="#c9a52a" stroke-width="0.9"/><text x="13.05" y="12.8" font-family="Liberation Sans" font-weight="bold" font-size="8.5" fill="#333" text-anchor="middle">abc</text></svg>
<svg class="a" style="left:463px;top:92px;overflow:visible" width="24" height="24" viewBox="0 0 24 24"><circle cx="12" cy="12" r="11.5" fill="#f7e04a" stroke="#c9a52a" stroke-width="0.6"/><path d="M12 12L2.3 6.2A11.5 11.5 0 0 1 21.7 6.2z" fill="#e02a20"/><path d="M12 12L2.3 6.2A11.5 11.5 0 0 0 12 23.5z" fill="#7dc142"/><path d="M12 12V23.5M12 12L2.3 6.2M12 12l9.7-5.8" stroke="#fff" stroke-width="1.3"/></svg>
<svg class="a" style="left:498px;top:92px;overflow:visible" width="24" height="24" viewBox="0 0 24 24"><rect x="0.5" y="2.5" width="23" height="19.5" fill="#dce9f8" stroke="#3a7ad8" stroke-width="1.2"/><path d="M4.5 4.5h14.0v10.5H4.5L0.5 9.75z" fill="#fbe05a" stroke="#c9a52a" stroke-width="0.9"/><text x="11.8" y="12.8" font-family="Liberation Sans" font-weight="bold" font-size="8.5" fill="#333" text-anchor="middle">ab</text><path d="M17.5 9.5v5" stroke="#fff" stroke-width="2.2"/><path d="M16.4 9.5v5M18.6 9.5v5" stroke="#777" stroke-width="0.5"/><circle cx="18.5" cy="17.7" r="4.4" fill="#b02020" stroke="#801818" stroke-width="0.6"/></svg>
<svg class="a" style="left:533px;top:92px;overflow:visible" width="24" height="24" viewBox="0 0 24 24"><path d="M4.5 4.5h14.0v10.5H4.5L0.5 9.75z" fill="#ececec" stroke="#a0a0a0" stroke-width="0.9"/><text x="11.8" y="12.8" font-family="Liberation Sans" font-weight="bold" font-size="8.5" fill="#8a8a8a" text-anchor="middle">ab</text><path d="M17.5 9.5v5" stroke="#fff" stroke-width="2.2"/><path d="M16.4 9.5v5M18.6 9.5v5" stroke="#999" stroke-width="0.5"/><circle cx="18.7" cy="17.7" r="4.4" fill="#8c8c8c"/></svg>
<svg class="a" style="left:568px;top:92px;overflow:visible" width="24" height="24" viewBox="0 0 24 24"><path d="M4.5 4.5h16.5v10.5H4.5L0.5 9.75z" fill="#ececec" stroke="#a0a0a0" stroke-width="0.9"/><text x="13.05" y="12.8" font-family="Liberation Sans" font-weight="bold" font-size="8.5" fill="#8a8a8a" text-anchor="middle">abc</text><path d="M8 19.5c4-5 10-5 15 0c-5 4-11 4-15 0z" fill="#fff" stroke="#888" stroke-width="0.9"/><circle cx="15.5" cy="19.3" r="2" fill="#555"/></svg>
<svg class="a" style="left:603px;top:92px;overflow:visible" width="24" height="24" viewBox="0 0 24 24"><path d="M4.5 4.5h16.5v10.5H4.5L0.5 9.75z" fill="#ececec" stroke="#a0a0a0" stroke-width="0.9"/><text x="13.05" y="12.8" font-family="Liberation Sans" font-weight="bold" font-size="8.5" fill="#8a8a8a" text-anchor="middle">abc</text><rect x="13" y="13" width="11" height="11" rx="2" fill="#8e8e8e"/><path d="M15 18.5h4.5M17.5 15.5l3 3-3 3" stroke="#fff" stroke-width="1.8" fill="none"/></svg>
<svg class="a" style="left:638px;top:92px;overflow:visible" width="24" height="24" viewBox="0 0 24 24"><path d="M4.5 4.5h16.5v10.5H4.5L0.5 9.75z" fill="#ececec" stroke="#a0a0a0" stroke-width="0.9"/><text x="13.05" y="12.8" font-family="Liberation Sans" font-weight="bold" font-size="8.5" fill="#8a8a8a" text-anchor="middle">abc</text><rect x="13" y="13" width="11" height="11" rx="2" fill="#8e8e8e"/><path d="M21 18.5a3 3 0 1 1-1-2.3" stroke="#fff" stroke-width="1.6" fill="none"/></svg>
<svg class="a" style="left:673px;top:92px;overflow:visible" width="24" height="24" viewBox="0 0 24 24"><path d="M4.5 4.5h16.5v10.5H4.5L0.5 9.75z" fill="#ececec" stroke="#a0a0a0" stroke-width="0.9"/><text x="13.05" y="12.8" font-family="Liberation Sans" font-weight="bold" font-size="8.5" fill="#8a8a8a" text-anchor="middle">abc</text><rect x="13" y="13" width="11" height="11" rx="2" fill="#b8b8b8"/><path d="M15.5 21.5l6-6" stroke="#fff" stroke-width="1.6"/></svg>
<svg class="a" style="left:722px;top:92px;overflow:visible" width="24" height="24" viewBox="0 0 24 24"><path d="M12 1c-5 0-5 2-5 4v3h5v1H4c-3 0-4 2-4 5.5S1 20 4 20h2v-3.5c0-2 1.5-3.5 3.5-3.5h5c2 0 3-1 3-3V5c0-2-2-4-5.5-4z" fill="#3a70b0"/><path d="M12 23c5 0 5-2 5-4v-3h-5v-1h8c3 0 4-2 4-5.5S23 4 20 4h-2v3.5c0 2-1.5 3.5-3.5 3.5h-5c-2 0-3 1-3 3V19c0 2 2 4 5.5 4z" fill="#f7d44a"/><circle cx="9.5" cy="3.8" r="1" fill="#fff"/><path d="M17 16.5l5 2.5-5 2.5" stroke="#444" stroke-width="1.4" fill="none"/></svg>
<svg class="a" style="left:772px;top:92px;overflow:visible" width="24" height="24" viewBox="0 0 24 24"><path d="M2 6l8-4 3 3-8 5z" fill="#eee" stroke="#333" stroke-width="1.1"/><path d="M9 8L2 20" stroke="#333" stroke-width="3.5" stroke-linecap="round"/><path d="M9 8L2.5 19.5" stroke="#f0c830" stroke-width="2" stroke-linecap="round"/><path d="M10 6l2 2" stroke="#b06010" stroke-width="3"/><path d="M12 23c0-6 1-12 3-18M15 23c0-7 1-13 0-19M18 23c0-6-1-12 1-18M14 22c2-6 5-10 4-17M20 23c0-6 1-10-1-16" stroke="#4a9a48" stroke-width="1" fill="none"/></svg>
<svg class="a" style="left:805px;top:92px;overflow:visible" width="24" height="24" viewBox="0 0 24 24"><path d="M4 3h15v19H4z" fill="#ececec" stroke="#bbb" stroke-width="0.9"/><path d="M4 3c-3 0-3 3 0 3" fill="none" stroke="#bbb"/><rect x="7" y="7" width="7.5" height="10" fill="none" stroke="#999" stroke-width="0.9" stroke-dasharray="1.5 1.2"/><path d="M17 23c0-6 1-12 0-18M19 23c0-7 0-12 1-17M21 23c-1-6 0-11 1-15M23 23c0-5-1-8 0-12" stroke="#aaa" stroke-width="0.9" fill="none"/></svg>
<svg class="a" style="left:17px;top:131px;overflow:visible" width="24" height="24" viewBox="0 0 24 24"><rect x="0" y="0" width="24" height="24" fill="#000"/><path d="M24 9.6H10V19.2H19.2V24" stroke="#c8c8c8" stroke-width="1.4" fill="none"/><g stroke="#fff" stroke-width="1.7" fill="none"><path d="M0.5 1L24 5.7 11 8.1 0 11.5"/><path d="M11.5 0L9.6 9.1 8.1 12.9 6.7 24"/><path d="M0.9 0.9L6.7 11.5 8.1 12.9"/><path d="M11.5 19.2L13.4 24M19.2 19.2L16.3 24"/></g></svg>
<svg class="a" style="left:52px;top:131px;overflow:visible" width="24" height="24" viewBox="0 0 24 24"><rect x="0" y="0" width="24" height="24" fill="#000"/><path d="M24 9.6H9.8V19.2H19.4V24" stroke="#c8c8c8" stroke-width="1.4" fill="none"/><g stroke-width="1.7" fill="none"><path d="M1.6 0.9L23.8 5.9 10.3 8.6" stroke="#6cd020"/><path d="M12.2 0.4L9.8 8.6 7.9 13.9" stroke="#e8a030"/><path d="M0.2 12L5.5 10.8 7.4 11" stroke="#e8a030"/><path d="M0.2 0.4L7.4 11" stroke="#e83030"/><path d="M7.4 11L12.7 23.6" stroke="#e89030"/><path d="M7.9 12.9L5.5 23.6" stroke="#6cd020"/><path d="M15 24L18.5 19.8" stroke="#2040ff" stroke-width="2"/></g></svg>
<svg class="a" style="left:87px;top:131px;overflow:visible" width="24" height="24" viewBox="0 0 24 24"><rect x="0" y="0" width="24" height="24" fill="#0040ff"/><text x="9.5" y="22.5" font-family="Liberation Sans" font-size="14" fill="#fff">Cl</text></svg>
<svg class="a" style="left:122px;top:131px;overflow:visible" width="24" height="24" viewBox="0 0 24 24"><rect x="0" y="0" width="24" height="24" fill="#ffc814"/><text x="5.5" y="22.5" font-family="Liberation Sans" font-size="14" fill="#fff">Ca</text></svg>
<svg class="a" style="left:157px;top:131px;overflow:visible" width="24" height="24" viewBox="0 0 24 24"><rect x="0" y="0" width="24" height="24" fill="#ff0000"/><text x="10.5" y="22.5" font-family="Liberation Sans" font-size="14" fill="#fff">In</text></svg>
<svg class="a" style="left:192px;top:131px;overflow:visible" width="24" height="24" viewBox="0 0 24 24"><rect x="0" y="0" width="24" height="24" fill="#ffff00"/><text x="9.5" y="22.5" font-family="Liberation Sans" font-size="14" fill="#888">Tr</text></svg>
<div class="a" style="left:50px;top:163px;width:1px;height:534px;background:#b4b4b4"></div>
<div class="a" style="left:51px;top:163px;width:1px;height:534px;background:#fbfbfb"></div>
<svg class="a" style="left:5px;top:170px" width="44" height="7" viewBox="0 0 44 7" ><rect x="1" y="1" width="2" height="2" fill="#fdfdfd"/><rect x="0" y="0" width="2" height="2" fill="#bdbdbd"/><rect x="4" y="4" width="2" height="2" fill="#fdfdfd"/><rect x="3" y="3" width="2" height="2" fill="#bdbdbd"/><rect x="7" y="1" width="2" height="2" fill="#fdfdfd"/><rect x="6" y="0" width="2" height="2" fill="#bdbdbd"/><rect x="10" y="4" width="2" height="2" fill="#fdfdfd"/><rect x="9" y="3" width="2" height="2" fill="#bdbdbd"/><rect x="13" y="1" width="2" height="2" fill="#fdfdfd"/><rect x="12" y="0" width="2" height="2" fill="#bdbdbd"/><rect x="16" y="4" width="2" height="2" fill="#fdfdfd"/><rect x="15" y="3" width="2" height="2" fill="#bdbdbd"/><rect x="19" y="1" width="2" height="2" fill="#fdfdfd"/><rect x="18" y="0" width="2" height="2" fill="#bdbdbd"/><rect x="22" y="4" width="2" height="2" fill="#fdfdfd"/><rect x="21" y="3" width="2" height="2" fill="#bdbdbd"/><rect x="25" y="1" width="2" height="2" fill="#fdfdfd"/><rect x="24" y="0" width="2" height="2" fill="#bdbdbd"/><rect x="28" y="4" width="2" height="2" fill="#fdfdfd"/><rect x="27" y="3" width="2" height="2" fill="#bdbdbd"/><rect x="31" y="1" width="2" height="2" fill="#fdfdfd"/><rect x="30" y="0" width="2" height="2" fill="#bdbdbd"/><rect x="34" y="4" width="2" height="2" fill="#fdfdfd"/><rect x="33" y="3" width="2" height="2" fill="#bdbdbd"/><rect x="37" y="1" width="2" height="2" fill="#fdfdfd"/><rect x="36" y="0" width="2" height="2" fill="#bdbdbd"/><rect x="40" y="4" width="2" height="2" fill="#fdfdfd"/><rect x="39" y="3" width="2" height="2" fill="#bdbdbd"/></svg>
<svg class="a" style="left:8px;top:179px;overflow:visible" width="24" height="24" viewBox="0 0 24 24"><path d="M2.2 2.2 8.7 17 15.5 2.2 21.8 2.2" stroke="#2c4a6e" stroke-width="1.4" fill="none"/><circle cx="2.2" cy="2.2" r="1.9" fill="#fff" stroke="#2c4a6e" stroke-width="1.1"/><circle cx="8.7" cy="17" r="1.9" fill="#fff" stroke="#2c4a6e" stroke-width="1.1"/><circle cx="15.5" cy="2.2" r="1.9" fill="#fff" stroke="#2c4a6e" stroke-width="1.1"/><circle cx="21.8" cy="2.2" r="1.9" fill="#fff" stroke="#2c4a6e" stroke-width="1.1"/><rect x="14.1" y="14.2" width="10" height="10" rx="2" fill="#519a5b" stroke="#3f8048" stroke-width="0.6"/><path d="M19.1 16.2v6M16.1 19.2h6" stroke="#fff" stroke-width="2"/></svg>
<svg class="a" style="left:8px;top:212px;overflow:visible" width="24" height="24" viewBox="0 0 24 24"><rect x="0.0" y="1.0" width="6.7" height="6.6" fill="#1f3a5e"/><rect x="6.7" y="1.0" width="6.7" height="6.6" fill="#6f9fd4"/><rect x="13.4" y="1.0" width="6.7" height="6.6" fill="#1f3a5e"/><rect x="0.0" y="7.6" width="6.7" height="6.6" fill="#6f9fd4"/><rect x="6.7" y="7.6" width="6.7" height="6.6" fill="#1f3a5e"/><rect x="13.4" y="7.6" width="6.7" height="6.6" fill="#6f9fd4"/><rect x="0.0" y="14.2" width="6.7" height="6.6" fill="#1f3a5e"/><rect x="6.7" y="14.2" width="6.7" height="6.6" fill="#6f9fd4"/><rect x="14.5" y="16" width="10" height="10" rx="2" fill="#519a5b" stroke="#3f8048" stroke-width="0.6"/><path d="M19.5 18v6M16.5 21.0h6" stroke="#fff" stroke-width="2"/></svg>
<svg class="a" style="left:8px;top:247px;overflow:visible" width="24" height="24" viewBox="0 0 24 24"><path d="M0.5 24c2-9 9-20 22-24c-1 9-7 17-18 20z" fill="#8ab0dc" stroke="#2c4a6e" stroke-width="1"/><path d="M1 23.5C6 15 12 8 21 1.5" stroke="#2c4a6e" stroke-width="0.8"/><path d="M8 14l6-1M11 10l6-1M6 18l4-0.5" stroke="#fff" stroke-width="0.6"/><rect x="14.5" y="14.8" width="10" height="10" rx="2" fill="#519a5b" stroke="#3f8048" stroke-width="0.6"/><path d="M19.5 16.8v6M16.5 19.8h6" stroke="#fff" stroke-width="2"/></svg>
<svg class="a" style="left:8px;top:279px;overflow:visible" width="24" height="24" viewBox="0 0 24 24"><path d="M0.5 6c0-4 4-5 9-5s8 1 9 4c.8 3-.5 6-2 8v4c0 2-3 2-3 0v-3c-2 .3-3.5 0-4.5-.5l-.8 4.5c0 2-3 2-3 0V11C1.5 11 .5 9 .5 6z" fill="#4f7fbe" stroke="#2c4a6e" stroke-width="0.8"/><path d="M9 3c-2 2-2 6 0 8" stroke="#2c4a6e" stroke-width="0.8" fill="none"/><rect x="14.8" y="17" width="10" height="10" rx="2" fill="#519a5b" stroke="#3f8048" stroke-width="0.6"/><path d="M19.8 19v6M16.8 22.0h6" stroke="#fff" stroke-width="2"/></svg>
<svg class="a" style="left:38px;top:290px" width="9" height="5" viewBox="0 0 9 5" ><path d="M0 0h9l-4.5 5z" fill="#000"/></svg>
<svg class="a" style="left:8px;top:314px;overflow:visible" width="24" height="24" viewBox="0 0 24 24"><circle cx="11.7" cy="12" r="11.5" fill="#bcd6f2" stroke="#5a8ac6" stroke-width="1"/><path d="M0.5 12h22M11.7 1v22M2 7h19.5M2 17h19.5" stroke="#e8f2ff" stroke-width="0.7"/><path d="M3.5 5.5c2-1.5 5-1.5 6.5 0l-.5 3.5-2.5.5-1 2 1.5 3.5-1.5 1L3.5 13 2.5 9z M12.5 4.5h5l2 3-2.5 1.5 1 3-2 2.5-2-3-2.5-1 .5-3.5z M14.5 15.5l3.5-.5 1 3-3.5 2.5z" fill="#2c5a90"/><rect x="14.8" y="16.4" width="10" height="10" rx="2" fill="#519a5b" stroke="#3f8048" stroke-width="0.6"/><path d="M19.8 18.4v6M16.8 21.4h6" stroke="#fff" stroke-width="2"/></svg>
<svg class="a" style="left:38px;top:324px" width="9" height="5" viewBox="0 0 9 5" ><path d="M0 0h9l-4.5 5z" fill="#000"/></svg>
<svg class="a" style="left:8px;top:347px;overflow:visible" width="24" height="24" viewBox="0 0 24 24"><circle cx="11.7" cy="12.4" r="11.5" fill="#2e5585" stroke="#1f3a5e" stroke-width="1"/><path d="M2 8h20M0.5 13h22M3 18h18" stroke="#9cc0ea" stroke-width="2"/><ellipse cx="11.7" cy="12.4" rx="5" ry="11" fill="none" stroke="#9cc0ea" stroke-width="1.3"/><rect x="14.8" y="16.8" width="10" height="10" rx="2" fill="#519a5b" stroke="#3f8048" stroke-width="0.6"/><path d="M19.8 18.8v6M16.8 21.8h6" stroke="#fff" stroke-width="2"/></svg>
<svg class="a" style="left:8px;top:380px;overflow:visible" width="24" height="24" viewBox="0 0 24 24"><circle cx="11.7" cy="12" r="11.5" fill="#e4eefa" stroke="#6a9ad0" stroke-width="1"/><path d="M1 8h21M0.5 12h22M1 16h21M11.7 1v22M6 2v20M17.5 2v20" stroke="#9cbfe8" stroke-width="0.8"/><path d="M5 6 9.5 18 14 6 19 6" stroke="#222" stroke-width="1.4" fill="none"/><circle cx="5" cy="6" r="1.5" fill="#fff" stroke="#222" stroke-width="1.1"/><circle cx="9.5" cy="18" r="1.5" fill="#fff" stroke="#222" stroke-width="1.1"/><circle cx="14" cy="6" r="1.5" fill="#fff" stroke="#222" stroke-width="1.1"/><circle cx="19" cy="6" r="1.5" fill="#fff" stroke="#222" stroke-width="1.1"/><rect x="14.8" y="18" width="10" height="10" rx="2" fill="#519a5b" stroke="#3f8048" stroke-width="0.6"/><path d="M19.8 20v6M16.8 23.0h6" stroke="#fff" stroke-width="2"/></svg>
<svg class="a" style="left:38px;top:392px" width="9" height="5" viewBox="0 0 9 5" ><path d="M0 0h9l-4.5 5z" fill="#000"/></svg>
<svg class="a" style="left:8px;top:417px;overflow:visible" width="24" height="24" viewBox="0 0 24 24"><circle cx="6.5" cy="6.5" r="3.4" fill="#3f6ea8"/><path d="M9.5 6c.5 5-2.5 9-6 11.5" stroke="#3f6ea8" stroke-width="2.6" fill="none" stroke-linecap="round"/><rect x="15.2" y="15" width="9" height="9" rx="2" fill="#519a5b" stroke="#3f8048" stroke-width="0.6"/><path d="M19.7 17v5M17.2 19.5h5" stroke="#fff" stroke-width="2"/></svg>
<svg class="a" style="left:8px;top:451px;overflow:visible" width="24" height="24" viewBox="0 0 24 24"><rect x="1" y="1" width="21.5" height="21.5" rx="3" fill="#a9c6e8" stroke="#5a8ac6"/><path d="M3.5 3 8.5 18 13.5 3 19 3" stroke="#2c4a6e" stroke-width="1.4" fill="none"/><circle cx="3.5" cy="3" r="1.6" fill="#fff" stroke="#2c4a6e" stroke-width="1.1"/><circle cx="8.5" cy="18" r="1.6" fill="#fff" stroke="#2c4a6e" stroke-width="1.1"/><circle cx="13.5" cy="3" r="1.6" fill="#fff" stroke="#2c4a6e" stroke-width="1.1"/><circle cx="19" cy="3" r="1.6" fill="#fff" stroke="#2c4a6e" stroke-width="1.1"/><rect x="15" y="14.3" width="9.5" height="9.5" rx="2" fill="#519a5b" stroke="#3f8048" stroke-width="0.6"/><path d="M19.75 16.3v5.5M17 19.05h5.5" stroke="#fff" stroke-width="2"/></svg>
<svg class="a" style="left:8px;top:484px;overflow:visible" width="24" height="24" viewBox="0 0 24 24"><path d="M1.5 2.5 9 18 17 2.5 22.5 2.5" stroke="#2c4a6e" stroke-width="1.4" fill="none"/><circle cx="1.5" cy="2.5" r="1.9" fill="#fff" stroke="#2c4a6e" stroke-width="1.1"/><circle cx="9" cy="18" r="1.9" fill="#fff" stroke="#2c4a6e" stroke-width="1.1"/><circle cx="17" cy="2.5" r="1.9" fill="#fff" stroke="#2c4a6e" stroke-width="1.1"/><circle cx="22.5" cy="2.5" r="1.9" fill="#fff" stroke="#2c4a6e" stroke-width="1.1"/><rect x="15.2" y="15.6" width="9" height="9" rx="1.5" fill="#c9a214"/><circle cx="19.7" cy="20.1" r="1.98" fill="none" stroke="#fff" stroke-width="1.2"/><path d="M19.7 17.1v6M16.7 20.1h6M17.7 18.1l4 4M21.7 18.1l-4 4" stroke="#fff" stroke-width="0.9"/></svg>
<svg class="a" style="left:38px;top:494px" width="9" height="5" viewBox="0 0 9 5" ><path d="M0 0h9l-4.5 5z" fill="#000"/></svg>
<svg class="a" style="left:14px;top:519px;overflow:visible" width="24" height="24" viewBox="0 0 24 24"><rect x="3" y="5" width="20" height="8" rx="2" fill="#a9c6e8" stroke="#2c4a6e"/><rect x="7" y="2" width="6" height="13" rx="1" fill="#5a8ac6" stroke="#2c4a6e"/><path d="M1.5 13c1 5 4 8 9 9M3.5 13c1 4 3 6 7 7M5.5 13c1 3 2 4 5 5" stroke="#333" stroke-width="0.8" fill="none"/><rect x="14" y="13.5" width="10" height="10" rx="1.5" fill="#c9a214"/><circle cx="19.0" cy="18.5" r="2.2" fill="none" stroke="#fff" stroke-width="1.2"/><path d="M19.0 15.0v7M15.5 18.5h7M16.5 16.0l5 5M21.5 16.0l-5 5" stroke="#fff" stroke-width="0.9"/></svg>
<svg class="a" style="left:14px;top:553px;overflow:visible" width="24" height="24" viewBox="0 0 24 24"><rect x="0.5" y="2" width="20" height="16" rx="5" fill="#3a6096" stroke="#1f3a5e"/><path d="M5.5 2v16M10.5 2v16M15.5 2v16M0.5 7.3h20M0.5 12.6h20" stroke="#6f9fd4" stroke-width="0.8"/><rect x="5.5" y="7.3" width="5" height="5.3" fill="#1f3a5e"/><rect x="10.5" y="12.6" width="5" height="5.3" fill="#1f3a5e"/><rect x="14.5" y="14" width="10" height="10" rx="2" fill="#519a5b" stroke="#3f8048" stroke-width="0.6"/><path d="M19.5 16v6M16.5 19.0h6" stroke="#fff" stroke-width="2"/></svg>
<svg class="a" style="left:54px;top:169px" width="153" height="7" viewBox="0 0 153 7" ><rect x="1" y="1" width="2" height="2" fill="#fdfdfd"/><rect x="0" y="0" width="2" height="2" fill="#bdbdbd"/><rect x="4" y="4" width="2" height="2" fill="#fdfdfd"/><rect x="3" y="3" width="2" height="2" fill="#bdbdbd"/><rect x="7" y="1" width="2" height="2" fill="#fdfdfd"/><rect x="6" y="0" width="2" height="2" fill="#bdbdbd"/><rect x="10" y="4" width="2" height="2" fill="#fdfdfd"/><rect x="9" y="3" width="2" height="2" fill="#bdbdbd"/><rect x="13" y="1" width="2" height="2" fill="#fdfdfd"/><rect x="12" y="0" width="2" height="2" fill="#bdbdbd"/><rect x="16" y="4" width="2" height="2" fill="#fdfdfd"/><rect x="15" y="3" width="2" height="2" fill="#bdbdbd"/><rect x="19" y="1" width="2" height="2" fill="#fdfdfd"/><rect x="18" y="0" width="2" height="2" fill="#bdbdbd"/><rect x="22" y="4" width="2" height="2" fill="#fdfdfd"/><rect x="21" y="3" width="2" height="2" fill="#bdbdbd"/><rect x="25" y="1" width="2" height="2" fill="#fdfdfd"/><rect x="24" y="0" width="2" height="2" fill="#bdbdbd"/><rect x="28" y="4" width="2" height="2" fill="#fdfdfd"/><rect x="27" y="3" width="2" height="2" fill="#bdbdbd"/><rect x="31" y="1" width="2" height="2" fill="#fdfdfd"/><rect x="30" y="0" width="2" height="2" fill="#bdbdbd"/><rect x="34" y="4" width="2" height="2" fill="#fdfdfd"/><rect x="33" y="3" width="2" height="2" fill="#bdbdbd"/><rect x="37" y="1" width="2" height="2" fill="#fdfdfd"/><rect x="36" y="0" width="2" height="2" fill="#bdbdbd"/><rect x="40" y="4" width="2" height="2" fill="#fdfdfd"/><rect x="39" y="3" width="2" height="2" fill="#bdbdbd"/><rect x="43" y="1" width="2" height="2" fill="#fdfdfd"/><rect x="42" y="0" width="2" height="2" fill="#bdbdbd"/><rect x="46" y="4" width="2" height="2" fill="#fdfdfd"/><rect x="45" y="3" width="2" height="2" fill="#bdbdbd"/><rect x="49" y="1" width="2" height="2" fill="#fdfdfd"/><rect x="48" y="0" width="2" height="2" fill="#bdbdbd"/><rect x="52" y="4" width="2" height="2" fill="#fdfdfd"/><rect x="51" y="3" width="2" height="2" fill="#bdbdbd"/><rect x="55" y="1" width="2" height="2" fill="#fdfdfd"/><rect x="54" y="0" width="2" height="2" fill="#bdbdbd"/><rect x="58" y="4" width="2" height="2" fill="#fdfdfd"/><rect x="57" y="3" width="2" height="2" fill="#bdbdbd"/><rect x="61" y="1" width="2" height="2" fill="#fdfdfd"/><rect x="60" y="0" width="2" height="2" fill="#bdbdbd"/><rect x="64" y="4" width="2" height="2" fill="#fdfdfd"/><rect x="63" y="3" width="2" height="2" fill="#bdbdbd"/><rect x="67" y="1" width="2" height="2" fill="#fdfdfd"/><rect x="66" y="0" width="2" height="2" fill="#bdbdbd"/><rect x="70" y="4" width="2" height="2" fill="#fdfdfd"/><rect x="69" y="3" width="2" height="2" fill="#bdbdbd"/><rect x="73" y="1" width="2" height="2" fill="#fdfdfd"/><rect x="72" y="0" width="2" height="2" fill="#bdbdbd"/><rect x="76" y="4" width="2" height="2" fill="#fdfdfd"/><rect x="75" y="3" width="2" height="2" fill="#bdbdbd"/><rect x="79" y="1" width="2" height="2" fill="#fdfdfd"/><rect x="78" y="0" width="2" height="2" fill="#bdbdbd"/><rect x="82" y="4" width="2" height="2" fill="#fdfdfd"/><rect x="81" y="3" width="2" height="2" fill="#bdbdbd"/><rect x="85" y="1" width="2" height="2" fill="#fdfdfd"/><rect x="84" y="0" width="2" height="2" fill="#bdbdbd"/><rect x="88" y="4" width="2" height="2" fill="#fdfdfd"/><rect x="87" y="3" width="2" height="2" fill="#bdbdbd"/><rect x="91" y="1" width="2" height="2" fill="#fdfdfd"/><rect x="90" y="0" width="2" height="2" fill="#bdbdbd"/><rect x="94" y="4" width="2" height="2" fill="#fdfdfd"/><rect x="93" y="3" width="2" height="2" fill="#bdbdbd"/><rect x="97" y="1" width="2" height="2" fill="#fdfdfd"/><rect x="96" y="0" width="2" height="2" fill="#bdbdbd"/><rect x="100" y="4" width="2" height="2" fill="#fdfdfd"/><rect x="99" y="3" width="2" height="2" fill="#bdbdbd"/><rect x="103" y="1" width="2" height="2" fill="#fdfdfd"/><rect x="102" y="0" width="2" height="2" fill="#bdbdbd"/><rect x="106" y="4" width="2" height="2" fill="#fdfdfd"/><rect x="105" y="3" width="2" height="2" fill="#bdbdbd"/><rect x="109" y="1" width="2" height="2" fill="#fdfdfd"/><rect x="108" y="0" width="2" height="2" fill="#bdbdbd"/><rect x="112" y="4" width="2" height="2" fill="#fdfdfd"/><rect x="111" y="3" width="2" height="2" fill="#bdbdbd"/><rect x="115" y="1" width="2" height="2" fill="#fdfdfd"/><rect x="114" y="0" width="2" height="2" fill="#bdbdbd"/><rect x="118" y="4" width="2" height="2" fill="#fdfdfd"/><rect x="117" y="3" width="2" height="2" fill="#bdbdbd"/><rect x="121" y="1" width="2" height="2" fill="#fdfdfd"/><rect x="120" y="0" width="2" height="2" fill="#bdbdbd"/><rect x="124" y="4" width="2" height="2" fill="#fdfdfd"/><rect x="123" y="3" width="2" height="2" fill="#bdbdbd"/><rect x="127" y="1" width="2" height="2" fill="#fdfdfd"/><rect x="126" y="0" width="2" height="2" fill="#bdbdbd"/><rect x="130" y="4" width="2" height="2" fill="#fdfdfd"/><rect x="129" y="3" width="2" height="2" fill="#bdbdbd"/><rect x="133" y="1" width="2" height="2" fill="#fdfdfd"/><rect x="132" y="0" width="2" height="2" fill="#bdbdbd"/><rect x="136" y="4" width="2" height="2" fill="#fdfdfd"/><rect x="135" y="3" width="2" height="2" fill="#bdbdbd"/><rect x="139" y="1" width="2" height="2" fill="#fdfdfd"/><rect x="138" y="0" width="2" height="2" fill="#bdbdbd"/><rect x="142" y="4" width="2" height="2" fill="#fdfdfd"/><rect x="141" y="3" width="2" height="2" fill="#bdbdbd"/><rect x="145" y="1" width="2" height="2" fill="#fdfdfd"/><rect x="144" y="0" width="2" height="2" fill="#bdbdbd"/><rect x="148" y="4" width="2" height="2" fill="#fdfdfd"/><rect x="147" y="3" width="2" height="2" fill="#bdbdbd"/></svg>
<div class="t" style="left:212px;top:167px;font-size:9px;transform:none">Camadas</div>
<svg class="a" style="left:259px;top:169px" width="150" height="7" viewBox="0 0 150 7" ><rect x="1" y="1" width="2" height="2" fill="#fdfdfd"/><rect x="0" y="0" width="2" height="2" fill="#bdbdbd"/><rect x="4" y="4" width="2" height="2" fill="#fdfdfd"/><rect x="3" y="3" width="2" height="2" fill="#bdbdbd"/><rect x="7" y="1" width="2" height="2" fill="#fdfdfd"/><rect x="6" y="0" width="2" height="2" fill="#bdbdbd"/><rect x="10" y="4" width="2" height="2" fill="#fdfdfd"/><rect x="9" y="3" width="2" height="2" fill="#bdbdbd"/><rect x="13" y="1" width="2" height="2" fill="#fdfdfd"/><rect x="12" y="0" width="2" height="2" fill="#bdbdbd"/><rect x="16" y="4" width="2" height="2" fill="#fdfdfd"/><rect x="15" y="3" width="2" height="2" fill="#bdbdbd"/><rect x="19" y="1" width="2" height="2" fill="#fdfdfd"/><rect x="18" y="0" width="2" height="2" fill="#bdbdbd"/><rect x="22" y="4" width="2" height="2" fill="#fdfdfd"/><rect x="21" y="3" width="2" height="2" fill="#bdbdbd"/><rect x="25" y="1" width="2" height="2" fill="#fdfdfd"/><rect x="24" y="0" width="2" height="2" fill="#bdbdbd"/><rect x="28" y="4" width="2" height="2" fill="#fdfdfd"/><rect x="27" y="3" width="2" height="2" fill="#bdbdbd"/><rect x="31" y="1" width="2" height="2" fill="#fdfdfd"/><rect x="30" y="0" width="2" height="2" fill="#bdbdbd"/><rect x="34" y="4" width="2" height="2" fill="#fdfdfd"/><rect x="33" y="3" width="2" height="2" fill="#bdbdbd"/><rect x="37" y="1" width="2" height="2" fill="#fdfdfd"/><rect x="36" y="0" width="2" height="2" fill="#bdbdbd"/><rect x="40" y="4" width="2" height="2" fill="#fdfdfd"/><rect x="39" y="3" width="2" height="2" fill="#bdbdbd"/><rect x="43" y="1" width="2" height="2" fill="#fdfdfd"/><rect x="42" y="0" width="2" height="2" fill="#bdbdbd"/><rect x="46" y="4" width="2" height="2" fill="#fdfdfd"/><rect x="45" y="3" width="2" height="2" fill="#bdbdbd"/><rect x="49" y="1" width="2" height="2" fill="#fdfdfd"/><rect x="48" y="0" width="2" height="2" fill="#bdbdbd"/><rect x="52" y="4" width="2" height="2" fill="#fdfdfd"/><rect x="51" y="3" width="2" height="2" fill="#bdbdbd"/><rect x="55" y="1" width="2" height="2" fill="#fdfdfd"/><rect x="54" y="0" width="2" height="2" fill="#bdbdbd"/><rect x="58" y="4" width="2" height="2" fill="#fdfdfd"/><rect x="57" y="3" width="2" height="2" fill="#bdbdbd"/><rect x="61" y="1" width="2" height="2" fill="#fdfdfd"/><rect x="60" y="0" width="2" height="2" fill="#bdbdbd"/><rect x="64" y="4" width="2" height="2" fill="#fdfdfd"/><rect x="63" y="3" width="2" height="2" fill="#bdbdbd"/><rect x="67" y="1" width="2" height="2" fill="#fdfdfd"/><rect x="66" y="0" width="2" height="2" fill="#bdbdbd"/><rect x="70" y="4" width="2" height="2" fill="#fdfdfd"/><rect x="69" y="3" width="2" height="2" fill="#bdbdbd"/><rect x="73" y="1" width="2" height="2" fill="#fdfdfd"/><rect x="72" y="0" width="2" height="2" fill="#bdbdbd"/><rect x="76" y="4" width="2" height="2" fill="#fdfdfd"/><rect x="75" y="3" width="2" height="2" fill="#bdbdbd"/><rect x="79" y="1" width="2" height="2" fill="#fdfdfd"/><rect x="78" y="0" width="2" height="2" fill="#bdbdbd"/><rect x="82" y="4" width="2" height="2" fill="#fdfdfd"/><rect x="81" y="3" width="2" height="2" fill="#bdbdbd"/><rect x="85" y="1" width="2" height="2" fill="#fdfdfd"/><rect x="84" y="0" width="2" height="2" fill="#bdbdbd"/><rect x="88" y="4" width="2" height="2" fill="#fdfdfd"/><rect x="87" y="3" width="2" height="2" fill="#bdbdbd"/><rect x="91" y="1" width="2" height="2" fill="#fdfdfd"/><rect x="90" y="0" width="2" height="2" fill="#bdbdbd"/><rect x="94" y="4" width="2" height="2" fill="#fdfdfd"/><rect x="93" y="3" width="2" height="2" fill="#bdbdbd"/><rect x="97" y="1" width="2" height="2" fill="#fdfdfd"/><rect x="96" y="0" width="2" height="2" fill="#bdbdbd"/><rect x="100" y="4" width="2" height="2" fill="#fdfdfd"/><rect x="99" y="3" width="2" height="2" fill="#bdbdbd"/><rect x="103" y="1" width="2" height="2" fill="#fdfdfd"/><rect x="102" y="0" width="2" height="2" fill="#bdbdbd"/><rect x="106" y="4" width="2" height="2" fill="#fdfdfd"/><rect x="105" y="3" width="2" height="2" fill="#bdbdbd"/><rect x="109" y="1" width="2" height="2" fill="#fdfdfd"/><rect x="108" y="0" width="2" height="2" fill="#bdbdbd"/><rect x="112" y="4" width="2" height="2" fill="#fdfdfd"/><rect x="111" y="3" width="2" height="2" fill="#bdbdbd"/><rect x="115" y="1" width="2" height="2" fill="#fdfdfd"/><rect x="114" y="0" width="2" height="2" fill="#bdbdbd"/><rect x="118" y="4" width="2" height="2" fill="#fdfdfd"/><rect x="117" y="3" width="2" height="2" fill="#bdbdbd"/><rect x="121" y="1" width="2" height="2" fill="#fdfdfd"/><rect x="120" y="0" width="2" height="2" fill="#bdbdbd"/><rect x="124" y="4" width="2" height="2" fill="#fdfdfd"/><rect x="123" y="3" width="2" height="2" fill="#bdbdbd"/><rect x="127" y="1" width="2" height="2" fill="#fdfdfd"/><rect x="126" y="0" width="2" height="2" fill="#bdbdbd"/><rect x="130" y="4" width="2" height="2" fill="#fdfdfd"/><rect x="129" y="3" width="2" height="2" fill="#bdbdbd"/><rect x="133" y="1" width="2" height="2" fill="#fdfdfd"/><rect x="132" y="0" width="2" height="2" fill="#bdbdbd"/><rect x="136" y="4" width="2" height="2" fill="#fdfdfd"/><rect x="135" y="3" width="2" height="2" fill="#bdbdbd"/><rect x="139" y="1" width="2" height="2" fill="#fdfdfd"/><rect x="138" y="0" width="2" height="2" fill="#bdbdbd"/><rect x="142" y="4" width="2" height="2" fill="#fdfdfd"/><rect x="141" y="3" width="2" height="2" fill="#bdbdbd"/><rect x="145" y="1" width="2" height="2" fill="#fdfdfd"/><rect x="144" y="0" width="2" height="2" fill="#bdbdbd"/></svg>
<div class="a" style="left:410px;top:165px;width:14px;height:14px;border:1px solid #a8a8a8;border-radius:3px;background:#f4f4f4"></div>
<svg class="a" style="left:410px;top:165px" width="14" height="14" viewBox="0 0 14 14" ><rect x="3.5" y="5.5" width="6" height="5" fill="none" stroke="#000" stroke-width="1.4"/><path d="M5.5 5.5v-2h6v5h-2" fill="none" stroke="#000" stroke-width="1.4"/></svg>
<div class="a" style="left:425px;top:165px;width:14px;height:14px;border:1px solid #a8a8a8;border-radius:3px;background:#f4f4f4"></div>
<svg class="a" style="left:425px;top:165px" width="14" height="14" viewBox="0 0 14 14" ><path d="M3 3l8 8M11 3l-8 8" stroke="#000" stroke-width="1.5"/></svg>
<svg class="a" style="left:60.0px;top:189.0px;overflow:visible" width="16" height="16" viewBox="0 0 20 20"><path d="M1 13l8-6 6 6-5 5z" fill="#e8c840"/><path d="M1 13l4 3 -1 2-4-2z" fill="#e04040"/><path d="M2 10l6-4 3 2-6 5z" fill="#4a80d0"/><path d="M10 12l8-9" stroke="#d09020" stroke-width="2"/></svg>
<svg class="a" style="left:87.0px;top:189.0px;overflow:visible" width="16" height="16" viewBox="0 0 20 20"><rect x="2" y="6" width="11" height="12" fill="none" stroke="#777" stroke-width="0.9"/><rect x="5" y="3" width="11" height="12" fill="#f0f0f0" stroke="#777" stroke-width="0.9"/><path d="M9 9V2c0-2 3-2 3 0v7" stroke="#4a80d0" fill="none" stroke-width="1"/><rect x="12" y="13" width="7" height="7" rx="1" fill="#519a5b"/><path d="M15.5 14.5v4M13.5 16.5h4" stroke="#fff" stroke-width="1.3"/></svg>
<svg class="a" style="left:114.0px;top:189.0px;overflow:visible" width="16" height="16" viewBox="0 0 20 20"><path d="M1 9c5-6 13-6 18 0c-5 6-13 6-18 0z" fill="#eef" stroke="#888" stroke-width="0.8"/><circle cx="10" cy="9" r="4" fill="#5a8cc8"/><circle cx="10" cy="9" r="1.5" fill="#222"/><path d="M14 16h6l-3 3z" fill="#000"/></svg>
<svg class="a" style="left:141.0px;top:189.0px;overflow:visible" width="16" height="16" viewBox="0 0 20 20"><path d="M1 2h18l-7 8v9l-4-2v-7z" fill="#5a8cc8" stroke="#3d6ea8" stroke-width="0.6"/><path d="M1 2h18v2H1z" fill="#f7d44a"/></svg>
<svg class="a" style="left:168.0px;top:189.0px;overflow:visible" width="16" height="16" viewBox="0 0 20 20"><path d="M10 12h10l-1.5 8h-7z" fill="#b4b4b4" stroke="#999" stroke-width="0.6"/><path d="M10.5 4.5C8.5 2 3 2.2 3 5.5c0 2 2 3 4 3-3 0-5 1.5-5 3.5 0 3 6 3.5 8.5 1" fill="none" stroke="#6b2e8a" stroke-width="2"/></svg>
<svg class="a" style="left:190px;top:195px" width="9" height="5" viewBox="0 0 9 5" ><path d="M0 0h9l-4.5 5z" fill="#000"/></svg>
<svg class="a" style="left:207.0px;top:189.0px;overflow:visible" width="16" height="16" viewBox="0 0 20 20"><path d="M3 2v16M3 3h6M3 17h6" stroke="#999" stroke-width="0.8" fill="none"/><rect x="4.5" y="5.5" width="3" height="3" fill="#fff" stroke="#f08020" stroke-width="1"/><rect x="4.5" y="12.5" width="3" height="3" fill="#fff" stroke="#f08020" stroke-width="1"/><path d="M13 2h3v10h3l-4.5 6-4.5-6h3z" fill="#5a8cc8" stroke="#3d6ea8" stroke-width="0.6"/></svg>
<svg class="a" style="left:234.0px;top:189.0px;overflow:visible" width="16" height="16" viewBox="0 0 20 20"><path d="M3 2v16M3 3h6M3 17h6" stroke="#999" stroke-width="0.8" fill="none"/><rect x="4.5" y="5.5" width="3" height="3" fill="#fff" stroke="#f08020" stroke-width="1"/><rect x="4.5" y="12.5" width="3" height="3" fill="#fff" stroke="#f08020" stroke-width="1"/><path d="M13 18h3V8h3l-4.5-6-4.5 6h3z" fill="#5a8cc8" stroke="#3d6ea8" stroke-width="0.6"/></svg>
<svg class="a" style="left:261.0px;top:189.0px;overflow:visible" width="16" height="16" viewBox="0 0 20 20"><rect x="2" y="2" width="12" height="13" fill="#fff" stroke="#666" stroke-width="0.9"/><rect x="10" y="13" width="8" height="5" rx="1" fill="#e0302a"/><path d="M11.5 15.5h5" stroke="#fff" stroke-width="1.2"/></svg>
<div class="a" style="left:52px;top:214px;width:388px;height:184px;background:#fff;border:1px solid #0078d7;border-width:1px 2px 2px 1px;border-radius:2px"></div>
<div class="a" style="left:53px;top:215px;width:385px;height:17px;background:#0078d7"></div>
<svg class="a" style="left:64px;top:216px" width="10" height="9" viewBox="0 0 10 9" ><path d="M0.5 0v8.5H9" stroke="#9cc8f0" stroke-dasharray="1 1" fill="none"/></svg>
<div class="a" style="left:78px;top:218px;width:12px;height:12px;background:#fff;border:1px solid #e8e8e8"></div>
<svg class="a" style="left:78px;top:218px" width="12" height="12" viewBox="0 0 12 12" ><path d="M3 3l6 6M9 3l-6 6" stroke="#000" stroke-width="2.4"/></svg>
<div class="a" style="left:96px;top:216px;width:16px;height:15px;background:#a9cdc7"></div>
<div class="a" style="left:115px;top:216px;width:323px;height:15px;border:1px dotted #f09020"></div>
<div class="t" style="left:118px;top:219px;font-weight:bold;color:#fff;text-decoration:underline;transform:none">Bairros</div>
<svg class="a" style="left:181px;top:399px" width="121" height="7" viewBox="0 0 121 7" ><rect x="1" y="1" width="2" height="2" fill="#fdfdfd"/><rect x="0" y="0" width="2" height="2" fill="#bdbdbd"/><rect x="4" y="4" width="2" height="2" fill="#fdfdfd"/><rect x="3" y="3" width="2" height="2" fill="#bdbdbd"/><rect x="7" y="1" width="2" height="2" fill="#fdfdfd"/><rect x="6" y="0" width="2" height="2" fill="#bdbdbd"/><rect x="10" y="4" width="2" height="2" fill="#fdfdfd"/><rect x="9" y="3" width="2" height="2" fill="#bdbdbd"/><rect x="13" y="1" width="2" height="2" fill="#fdfdfd"/><rect x="12" y="0" width="2" height="2" fill="#bdbdbd"/><rect x="16" y="4" width="2" height="2" fill="#fdfdfd"/><rect x="15" y="3" width="2" height="2" fill="#bdbdbd"/><rect x="19" y="1" width="2" height="2" fill="#fdfdfd"/><rect x="18" y="0" width="2" height="2" fill="#bdbdbd"/><rect x="22" y="4" width="2" height="2" fill="#fdfdfd"/><rect x="21" y="3" width="2" height="2" fill="#bdbdbd"/><rect x="25" y="1" width="2" height="2" fill="#fdfdfd"/><rect x="24" y="0" width="2" height="2" fill="#bdbdbd"/><rect x="28" y="4" width="2" height="2" fill="#fdfdfd"/><rect x="27" y="3" width="2" height="2" fill="#bdbdbd"/><rect x="31" y="1" width="2" height="2" fill="#fdfdfd"/><rect x="30" y="0" width="2" height="2" fill="#bdbdbd"/><rect x="34" y="4" width="2" height="2" fill="#fdfdfd"/><rect x="33" y="3" width="2" height="2" fill="#bdbdbd"/><rect x="37" y="1" width="2" height="2" fill="#fdfdfd"/><rect x="36" y="0" width="2" height="2" fill="#bdbdbd"/><rect x="40" y="4" width="2" height="2" fill="#fdfdfd"/><rect x="39" y="3" width="2" height="2" fill="#bdbdbd"/><rect x="43" y="1" width="2" height="2" fill="#fdfdfd"/><rect x="42" y="0" width="2" height="2" fill="#bdbdbd"/><rect x="46" y="4" width="2" height="2" fill="#fdfdfd"/><rect x="45" y="3" width="2" height="2" fill="#bdbdbd"/><rect x="49" y="1" width="2" height="2" fill="#fdfdfd"/><rect x="48" y="0" width="2" height="2" fill="#bdbdbd"/><rect x="52" y="4" width="2" height="2" fill="#fdfdfd"/><rect x="51" y="3" width="2" height="2" fill="#bdbdbd"/><rect x="55" y="1" width="2" height="2" fill="#fdfdfd"/><rect x="54" y="0" width="2" height="2" fill="#bdbdbd"/><rect x="58" y="4" width="2" height="2" fill="#fdfdfd"/><rect x="57" y="3" width="2" height="2" fill="#bdbdbd"/><rect x="61" y="1" width="2" height="2" fill="#fdfdfd"/><rect x="60" y="0" width="2" height="2" fill="#bdbdbd"/><rect x="64" y="4" width="2" height="2" fill="#fdfdfd"/><rect x="63" y="3" width="2" height="2" fill="#bdbdbd"/><rect x="67" y="1" width="2" height="2" fill="#fdfdfd"/><rect x="66" y="0" width="2" height="2" fill="#bdbdbd"/><rect x="70" y="4" width="2" height="2" fill="#fdfdfd"/><rect x="69" y="3" width="2" height="2" fill="#bdbdbd"/><rect x="73" y="1" width="2" height="2" fill="#fdfdfd"/><rect x="72" y="0" width="2" height="2" fill="#bdbdbd"/><rect x="76" y="4" width="2" height="2" fill="#fdfdfd"/><rect x="75" y="3" width="2" height="2" fill="#bdbdbd"/><rect x="79" y="1" width="2" height="2" fill="#fdfdfd"/><rect x="78" y="0" width="2" height="2" fill="#bdbdbd"/><rect x="82" y="4" width="2" height="2" fill="#fdfdfd"/><rect x="81" y="3" width="2" height="2" fill="#bdbdbd"/><rect x="85" y="1" width="2" height="2" fill="#fdfdfd"/><rect x="84" y="0" width="2" height="2" fill="#bdbdbd"/><rect x="88" y="4" width="2" height="2" fill="#fdfdfd"/><rect x="87" y="3" width="2" height="2" fill="#bdbdbd"/><rect x="91" y="1" width="2" height="2" fill="#fdfdfd"/><rect x="90" y="0" width="2" height="2" fill="#bdbdbd"/><rect x="94" y="4" width="2" height="2" fill="#fdfdfd"/><rect x="93" y="3" width="2" height="2" fill="#bdbdbd"/><rect x="97" y="1" width="2" height="2" fill="#fdfdfd"/><rect x="96" y="0" width="2" height="2" fill="#bdbdbd"/><rect x="100" y="4" width="2" height="2" fill="#fdfdfd"/><rect x="99" y="3" width="2" height="2" fill="#bdbdbd"/><rect x="103" y="1" width="2" height="2" fill="#fdfdfd"/><rect x="102" y="0" width="2" height="2" fill="#bdbdbd"/><rect x="106" y="4" width="2" height="2" fill="#fdfdfd"/><rect x="105" y="3" width="2" height="2" fill="#bdbdbd"/><rect x="109" y="1" width="2" height="2" fill="#fdfdfd"/><rect x="108" y="0" width="2" height="2" fill="#bdbdbd"/><rect x="112" y="4" width="2" height="2" fill="#fdfdfd"/><rect x="111" y="3" width="2" height="2" fill="#bdbdbd"/><rect x="115" y="1" width="2" height="2" fill="#fdfdfd"/><rect x="114" y="0" width="2" height="2" fill="#bdbdbd"/><rect x="118" y="4" width="2" height="2" fill="#fdfdfd"/><rect x="117" y="3" width="2" height="2" fill="#bdbdbd"/></svg>
<svg class="a" style="left:54px;top:410px" width="123" height="7" viewBox="0 0 123 7" ><rect x="1" y="1" width="2" height="2" fill="#fdfdfd"/><rect x="0" y="0" width="2" height="2" fill="#bdbdbd"/><rect x="4" y="4" width="2" height="2" fill="#fdfdfd"/><rect x="3" y="3" width="2" height="2" fill="#bdbdbd"/><rect x="7" y="1" width="2" height="2" fill="#fdfdfd"/><rect x="6" y="0" width="2" height="2" fill="#bdbdbd"/><rect x="10" y="4" width="2" height="2" fill="#fdfdfd"/><rect x="9" y="3" width="2" height="2" fill="#bdbdbd"/><rect x="13" y="1" width="2" height="2" fill="#fdfdfd"/><rect x="12" y="0" width="2" height="2" fill="#bdbdbd"/><rect x="16" y="4" width="2" height="2" fill="#fdfdfd"/><rect x="15" y="3" width="2" height="2" fill="#bdbdbd"/><rect x="19" y="1" width="2" height="2" fill="#fdfdfd"/><rect x="18" y="0" width="2" height="2" fill="#bdbdbd"/><rect x="22" y="4" width="2" height="2" fill="#fdfdfd"/><rect x="21" y="3" width="2" height="2" fill="#bdbdbd"/><rect x="25" y="1" width="2" height="2" fill="#fdfdfd"/><rect x="24" y="0" width="2" height="2" fill="#bdbdbd"/><rect x="28" y="4" width="2" height="2" fill="#fdfdfd"/><rect x="27" y="3" width="2" height="2" fill="#bdbdbd"/><rect x="31" y="1" width="2" height="2" fill="#fdfdfd"/><rect x="30" y="0" width="2" height="2" fill="#bdbdbd"/><rect x="34" y="4" width="2" height="2" fill="#fdfdfd"/><rect x="33" y="3" width="2" height="2" fill="#bdbdbd"/><rect x="37" y="1" width="2" height="2" fill="#fdfdfd"/><rect x="36" y="0" width="2" height="2" fill="#bdbdbd"/><rect x="40" y="4" width="2" height="2" fill="#fdfdfd"/><rect x="39" y="3" width="2" height="2" fill="#bdbdbd"/><rect x="43" y="1" width="2" height="2" fill="#fdfdfd"/><rect x="42" y="0" width="2" height="2" fill="#bdbdbd"/><rect x="46" y="4" width="2" height="2" fill="#fdfdfd"/><rect x="45" y="3" width="2" height="2" fill="#bdbdbd"/><rect x="49" y="1" width="2" height="2" fill="#fdfdfd"/><rect x="48" y="0" width="2" height="2" fill="#bdbdbd"/><rect x="52" y="4" width="2" height="2" fill="#fdfdfd"/><rect x="51" y="3" width="2" height="2" fill="#bdbdbd"/><rect x="55" y="1" width="2" height="2" fill="#fdfdfd"/><rect x="54" y="0" width="2" height="2" fill="#bdbdbd"/><rect x="58" y="4" width="2" height="2" fill="#fdfdfd"/><rect x="57" y="3" width="2" height="2" fill="#bdbdbd"/><rect x="61" y="1" width="2" height="2" fill="#fdfdfd"/><rect x="60" y="0" width="2" height="2" fill="#bdbdbd"/><rect x="64" y="4" width="2" height="2" fill="#fdfdfd"/><rect x="63" y="3" width="2" height="2" fill="#bdbdbd"/><rect x="67" y="1" width="2" height="2" fill="#fdfdfd"/><rect x="66" y="0" width="2" height="2" fill="#bdbdbd"/><rect x="70" y="4" width="2" height="2" fill="#fdfdfd"/><rect x="69" y="3" width="2" height="2" fill="#bdbdbd"/><rect x="73" y="1" width="2" height="2" fill="#fdfdfd"/><rect x="72" y="0" width="2" height="2" fill="#bdbdbd"/><rect x="76" y="4" width="2" height="2" fill="#fdfdfd"/><rect x="75" y="3" width="2" height="2" fill="#bdbdbd"/><rect x="79" y="1" width="2" height="2" fill="#fdfdfd"/><rect x="78" y="0" width="2" height="2" fill="#bdbdbd"/><rect x="82" y="4" width="2" height="2" fill="#fdfdfd"/><rect x="81" y="3" width="2" height="2" fill="#bdbdbd"/><rect x="85" y="1" width="2" height="2" fill="#fdfdfd"/><rect x="84" y="0" width="2" height="2" fill="#bdbdbd"/><rect x="88" y="4" width="2" height="2" fill="#fdfdfd"/><rect x="87" y="3" width="2" height="2" fill="#bdbdbd"/><rect x="91" y="1" width="2" height="2" fill="#fdfdfd"/><rect x="90" y="0" width="2" height="2" fill="#bdbdbd"/><rect x="94" y="4" width="2" height="2" fill="#fdfdfd"/><rect x="93" y="3" width="2" height="2" fill="#bdbdbd"/><rect x="97" y="1" width="2" height="2" fill="#fdfdfd"/><rect x="96" y="0" width="2" height="2" fill="#bdbdbd"/><rect x="100" y="4" width="2" height="2" fill="#fdfdfd"/><rect x="99" y="3" width="2" height="2" fill="#bdbdbd"/><rect x="103" y="1" width="2" height="2" fill="#fdfdfd"/><rect x="102" y="0" width="2" height="2" fill="#bdbdbd"/><rect x="106" y="4" width="2" height="2" fill="#fdfdfd"/><rect x="105" y="3" width="2" height="2" fill="#bdbdbd"/><rect x="109" y="1" width="2" height="2" fill="#fdfdfd"/><rect x="108" y="0" width="2" height="2" fill="#bdbdbd"/><rect x="112" y="4" width="2" height="2" fill="#fdfdfd"/><rect x="111" y="3" width="2" height="2" fill="#bdbdbd"/><rect x="115" y="1" width="2" height="2" fill="#fdfdfd"/><rect x="114" y="0" width="2" height="2" fill="#bdbdbd"/><rect x="118" y="4" width="2" height="2" fill="#fdfdfd"/><rect x="117" y="3" width="2" height="2" fill="#bdbdbd"/></svg>
<div class="t" style="left:187px;top:408px;font-size:9px;transform:none">Identificar Resultados</div>
<svg class="a" style="left:283px;top:410px" width="126" height="7" viewBox="0 0 126 7" ><rect x="1" y="1" width="2" height="2" fill="#fdfdfd"/><rect x="0" y="0" width="2" height="2" fill="#bdbdbd"/><rect x="4" y="4" width="2" height="2" fill="#fdfdfd"/><rect x="3" y="3" width="2" height="2" fill="#bdbdbd"/><rect x="7" y="1" width="2" height="2" fill="#fdfdfd"/><rect x="6" y="0" width="2" height="2" fill="#bdbdbd"/><rect x="10" y="4" width="2" height="2" fill="#fdfdfd"/><rect x="9" y="3" width="2" height="2" fill="#bdbdbd"/><rect x="13" y="1" width="2" height="2" fill="#fdfdfd"/><rect x="12" y="0" width="2" height="2" fill="#bdbdbd"/><rect x="16" y="4" width="2" height="2" fill="#fdfdfd"/><rect x="15" y="3" width="2" height="2" fill="#bdbdbd"/><rect x="19" y="1" width="2" height="2" fill="#fdfdfd"/><rect x="18" y="0" width="2" height="2" fill="#bdbdbd"/><rect x="22" y="4" width="2" height="2" fill="#fdfdfd"/><rect x="21" y="3" width="2" height="2" fill="#bdbdbd"/><rect x="25" y="1" width="2" height="2" fill="#fdfdfd"/><rect x="24" y="0" width="2" height="2" fill="#bdbdbd"/><rect x="28" y="4" width="2" height="2" fill="#fdfdfd"/><rect x="27" y="3" width="2" height="2" fill="#bdbdbd"/><rect x="31" y="1" width="2" height="2" fill="#fdfdfd"/><rect x="30" y="0" width="2" height="2" fill="#bdbdbd"/><rect x="34" y="4" width="2" height="2" fill="#fdfdfd"/><rect x="33" y="3" width="2" height="2" fill="#bdbdbd"/><rect x="37" y="1" width="2" height="2" fill="#fdfdfd"/><rect x="36" y="0" width="2" height="2" fill="#bdbdbd"/><rect x="40" y="4" width="2" height="2" fill="#fdfdfd"/><rect x="39" y="3" width="2" height="2" fill="#bdbdbd"/><rect x="43" y="1" width="2" height="2" fill="#fdfdfd"/><rect x="42" y="0" width="2" height="2" fill="#bdbdbd"/><rect x="46" y="4" width="2" height="2" fill="#fdfdfd"/><rect x="45" y="3" width="2" height="2" fill="#bdbdbd"/><rect x="49" y="1" width="2" height="2" fill="#fdfdfd"/><rect x="48" y="0" width="2" height="2" fill="#bdbdbd"/><rect x="52" y="4" width="2" height="2" fill="#fdfdfd"/><rect x="51" y="3" width="2" height="2" fill="#bdbdbd"/><rect x="55" y="1" width="2" height="2" fill="#fdfdfd"/><rect x="54" y="0" width="2" height="2" fill="#bdbdbd"/><rect x="58" y="4" width="2" height="2" fill="#fdfdfd"/><rect x="57" y="3" width="2" height="2" fill="#bdbdbd"/><rect x="61" y="1" width="2" height="2" fill="#fdfdfd"/><rect x="60" y="0" width="2" height="2" fill="#bdbdbd"/><rect x="64" y="4" width="2" height="2" fill="#fdfdfd"/><rect x="63" y="3" width="2" height="2" fill="#bdbdbd"/><rect x="67" y="1" width="2" height="2" fill="#fdfdfd"/><rect x="66" y="0" width="2" height="2" fill="#bdbdbd"/><rect x="70" y="4" width="2" height="2" fill="#fdfdfd"/><rect x="69" y="3" width="2" height="2" fill="#bdbdbd"/><rect x="73" y="1" width="2" height="2" fill="#fdfdfd"/><rect x="72" y="0" width="2" height="2" fill="#bdbdbd"/><rect x="76" y="4" width="2" height="2" fill="#fdfdfd"/><rect x="75" y="3" width="2" height="2" fill="#bdbdbd"/><rect x="79" y="1" width="2" height="2" fill="#fdfdfd"/><rect x="78" y="0" width="2" height="2" fill="#bdbdbd"/><rect x="82" y="4" width="2" height="2" fill="#fdfdfd"/><rect x="81" y="3" width="2" height="2" fill="#bdbdbd"/><rect x="85" y="1" width="2" height="2" fill="#fdfdfd"/><rect x="84" y="0" width="2" height="2" fill="#bdbdbd"/><rect x="88" y="4" width="2" height="2" fill="#fdfdfd"/><rect x="87" y="3" width="2" height="2" fill="#bdbdbd"/><rect x="91" y="1" width="2" height="2" fill="#fdfdfd"/><rect x="90" y="0" width="2" height="2" fill="#bdbdbd"/><rect x="94" y="4" width="2" height="2" fill="#fdfdfd"/><rect x="93" y="3" width="2" height="2" fill="#bdbdbd"/><rect x="97" y="1" width="2" height="2" fill="#fdfdfd"/><rect x="96" y="0" width="2" height="2" fill="#bdbdbd"/><rect x="100" y="4" width="2" height="2" fill="#fdfdfd"/><rect x="99" y="3" width="2" height="2" fill="#bdbdbd"/><rect x="103" y="1" width="2" height="2" fill="#fdfdfd"/><rect x="102" y="0" width="2" height="2" fill="#bdbdbd"/><rect x="106" y="4" width="2" height="2" fill="#fdfdfd"/><rect x="105" y="3" width="2" height="2" fill="#bdbdbd"/><rect x="109" y="1" width="2" height="2" fill="#fdfdfd"/><rect x="108" y="0" width="2" height="2" fill="#bdbdbd"/><rect x="112" y="4" width="2" height="2" fill="#fdfdfd"/><rect x="111" y="3" width="2" height="2" fill="#bdbdbd"/><rect x="115" y="1" width="2" height="2" fill="#fdfdfd"/><rect x="114" y="0" width="2" height="2" fill="#bdbdbd"/><rect x="118" y="4" width="2" height="2" fill="#fdfdfd"/><rect x="117" y="3" width="2" height="2" fill="#bdbdbd"/><rect x="121" y="1" width="2" height="2" fill="#fdfdfd"/><rect x="120" y="0" width="2" height="2" fill="#bdbdbd"/></svg>
<div class="a" style="left:410px;top:406px;width:14px;height:14px;border:1px solid #a8a8a8;border-radius:3px;background:#f4f4f4"></div>
<svg class="a" style="left:410px;top:406px" width="14" height="14" viewBox="0 0 14 14" ><rect x="3.5" y="5.5" width="6" height="5" fill="none" stroke="#000" stroke-width="1.4"/><path d="M5.5 5.5v-2h6v5h-2" fill="none" stroke="#000" stroke-width="1.4"/></svg>
<div class="a" style="left:425px;top:406px;width:14px;height:14px;border:1px solid #a8a8a8;border-radius:3px;background:#f4f4f4"></div>
<svg class="a" style="left:425px;top:406px" width="14" height="14" viewBox="0 0 14 14" ><path d="M3 3l8 8M11 3l-8 8" stroke="#000" stroke-width="1.5"/></svg>
<svg class="a" style="left:60.0px;top:431.0px;overflow:visible" width="16" height="16" viewBox="0 0 20 20"><path d="M3 2v16M3 3h6M3 17h6" stroke="#999" stroke-width="0.8" fill="none"/><rect x="4.5" y="5.5" width="3" height="3" fill="#fff" stroke="#f08020" stroke-width="1"/><rect x="4.5" y="12.5" width="3" height="3" fill="#fff" stroke="#f08020" stroke-width="1"/><path d="M13 2h3v10h3l-4.5 6-4.5-6h3z" fill="#5a8cc8" stroke="#3d6ea8" stroke-width="0.6"/></svg>
<svg class="a" style="left:87.0px;top:431.0px;overflow:visible" width="16" height="16" viewBox="0 0 20 20"><path d="M3 2v16M3 3h6M3 17h6" stroke="#999" stroke-width="0.8" fill="none"/><rect x="4.5" y="5.5" width="3" height="3" fill="#fff" stroke="#f08020" stroke-width="1"/><rect x="4.5" y="12.5" width="3" height="3" fill="#fff" stroke="#f08020" stroke-width="1"/><path d="M13 18h3V8h3l-4.5-6-4.5 6h3z" fill="#5a8cc8" stroke="#3d6ea8" stroke-width="0.6"/></svg>
<svg class="a" style="left:114.0px;top:431.0px;overflow:visible" width="16" height="16" viewBox="0 0 20 20"><path d="M13 2h3v10h3l-4.5 6-4.5-6h3z" fill="#5a8cc8" stroke="#3d6ea8" stroke-width="0.6"/><path d="M7 1l1.8 3.6 4 .6-2.9 2.8.7 4-3.6-1.9-3.6 1.9.7-4L1.2 5.2l4-.6z" fill="#f7d020" stroke="#d0a010" stroke-width="0.6"/><rect x="4.5" y="13.5" width="3" height="3" fill="#fff" stroke="#f08020" stroke-width="1"/></svg>
<svg class="a" style="left:140.0px;top:431.0px;overflow:visible" width="16" height="16" viewBox="0 0 20 20"><rect x="1" y="5" width="3" height="3" fill="#555"/><rect x="1" y="11" width="3" height="3" fill="#555"/><rect x="6" y="4.5" width="13" height="4" rx="1" fill="#fff" stroke="#777" stroke-width="0.8"/><rect x="6" y="10.5" width="13" height="4" rx="1" fill="#fff" stroke="#777" stroke-width="0.8"/><path d="M8 6.5h9M8 12.5h9" stroke="#5a8cc8" stroke-width="1.5"/></svg>
<svg class="a" style="left:168.0px;top:431.0px;overflow:visible" width="16" height="16" viewBox="0 0 20 20"><rect x="1" y="1" width="12" height="12" fill="#fce24e" stroke="#c9a52a"/><rect x="10" y="11" width="8" height="8" rx="1.5" fill="#d9232e"/><circle cx="14" cy="15" r="2.3" fill="none" stroke="#fff" stroke-width="1"/></svg>
<svg class="a" style="left:195.0px;top:431.0px;overflow:visible" width="16" height="16" viewBox="0 0 20 20"><path d="M7 2h6l3 3v11H7z" fill="#eee" stroke="#bbb" stroke-width="0.8"/><path d="M4 5h6l3 3v11H4z" fill="#f4f4f4" stroke="#aaa" stroke-width="0.8"/></svg>
<svg class="a" style="left:222.0px;top:431.0px;overflow:visible" width="16" height="16" viewBox="0 0 20 20"><rect x="5" y="2" width="10" height="5" fill="#ddd" stroke="#bbb" stroke-width="0.8"/><rect x="1" y="7" width="18" height="8" rx="2" fill="#bcbcbc"/><rect x="5" y="12" width="10" height="6" fill="#eee" stroke="#bbb" stroke-width="0.8"/></svg>
<div class="a" style="left:53px;top:456px;width:388px;height:178px;background:#fff;border:1px solid #adadad;border-radius:2px"></div>
<div class="a" style="left:54px;top:457px;width:238px;height:20px;background:linear-gradient(#fafafa,#ececec);border:1px solid #9a9a9a;border-top-color:#d0d0d0"></div>
<div class="a" style="left:292px;top:457px;width:147px;height:20px;background:linear-gradient(#fafafa,#ececec);border:1px solid #9a9a9a;border-top-color:#d0d0d0"></div>
<div class="t" style="left:57px;top:462px;">Feição</div>
<div class="t" style="left:296px;top:462px;">Valor</div>
<div class="t" style="left:76px;top:479px;">Bairros</div>
<div class="a" style="left:54px;top:491px;width:385px;height:13px;background:#f3f3f3"></div>
<div class="t" style="left:96px;top:492px;">Densidade</div>
<div class="t" style="left:294px;top:492px;transform:scaleX(0.955)">25.28000000000</div>
<div class="t" style="left:117px;top:505px;">(Derivado)</div>
<div class="a" style="left:54px;top:517px;width:385px;height:13px;background:#f3f3f3"></div>
<div class="t" style="left:117px;top:518px;">(Ações)</div>
<div class="t" style="left:116px;top:531px;">BAIRRO</div>
<div class="t" style="left:294px;top:531px;transform:scaleX(0.955)">Centro</div>
<div class="a" style="left:54px;top:543px;width:385px;height:13px;background:#f3f3f3"></div>
<div class="t" style="left:116px;top:544px;">CÓD</div>
<div class="t" style="left:294px;top:544px;transform:scaleX(0.955)">17</div>
<div class="t" style="left:116px;top:557px;">Cod_loc</div>
<div class="t" style="left:294px;top:557px;transform:scaleX(0.955)">8.00000000000</div>
<div class="a" style="left:54px;top:569px;width:385px;height:13px;background:#f3f3f3"></div>
<div class="t" style="left:116px;top:570px;">Bairro_1</div>
<div class="t" style="left:294px;top:570px;transform:scaleX(0.955)">Centro</div>
<div class="t" style="left:116px;top:583px;">Densidade</div>
<div class="t" style="left:294px;top:583px;transform:scaleX(0.955)">25.28000000000</div>
<div class="a" style="left:54px;top:595px;width:385px;height:13px;background:#f3f3f3"></div>
<div class="t" style="left:116px;top:596px;">Perim_km</div>
<div class="t" style="left:294px;top:596px;transform:scaleX(0.955)">6.93899849954</div>
<div class="t" style="left:116px;top:609px;">Area_km2</div>
<div class="t" style="left:294px;top:609px;transform:scaleX(0.955)">2.27886046875</div>
<svg class="a" style="left:50px;top:470px" width="80" height="160" viewBox="0 0 80 160" ><rect x="9.5" y="10.5" width="8" height="8" fill="#fff" stroke="#999"/><path d="M11.5 14.5h4" stroke="#333"/><path d="M18 14.5h5" stroke="#999" stroke-dasharray="1 1"/><rect x="29.5" y="23.5" width="8" height="8" fill="#fff" stroke="#999"/><path d="M31.5 27.5h4" stroke="#333"/><path d="M38 27.5h5" stroke="#999" stroke-dasharray="1 1"/><rect x="49.5" y="36.5" width="8" height="8" fill="#fff" stroke="#999"/><path d="M51.5 40.5h4" stroke="#333"/><path d="M53.5 38.5v4" stroke="#333"/><path d="M58 40.5h5" stroke="#999" stroke-dasharray="1 1"/><rect x="49.5" y="49.5" width="8" height="8" fill="#fff" stroke="#999"/><path d="M51.5 53.5h4" stroke="#333"/><path d="M53.5 51.5v4" stroke="#333"/><path d="M58 53.5h5" stroke="#999" stroke-dasharray="1 1"/><path d="M54.5 58V144.5" stroke="#999" stroke-dasharray="1 1"/><path d="M55 66.5h8" stroke="#999" stroke-dasharray="1 1"/><path d="M55 79.5h8" stroke="#999" stroke-dasharray="1 1"/><path d="M55 92.5h8" stroke="#999" stroke-dasharray="1 1"/><path d="M55 105.5h8" stroke="#999" stroke-dasharray="1 1"/><path d="M55 118.5h8" stroke="#999" stroke-dasharray="1 1"/><path d="M55 131.5h8" stroke="#999" stroke-dasharray="1 1"/><path d="M55 144.5h8" stroke="#999" stroke-dasharray="1 1"/></svg>
<div class="t" style="left:56px;top:644px;">Modo</div>
<div class="a" style="left:89px;top:641px;width:146px;height:19px;background:linear-gradient(#f6f6f6,#e6e6e6);border:1px solid #acacac;border-radius:3px"></div>
<div class="a" style="left:219px;top:642px;width:1px;height:17px;background:#c4c4c4"></div>
<div class="t" style="left:93px;top:644px;">Camada atual</div>
<svg class="a" style="left:223px;top:648px" width="8" height="4" viewBox="0 0 8 4" ><path d="M0 0h8l-4.0 4z" fill="#000"/></svg>
<div class="a" style="left:242px;top:644px;width:13px;height:12px;background:#fff;border:1px solid #a0a0a0;border-radius:2px"></div>
<div class="t" style="left:260px;top:644px;transform:scaleX(0.95)">Abrir automaticamente o formulário</div>
<div class="t" style="left:56px;top:673px;color:#838383">Exibir</div>
<div class="a" style="left:89px;top:670px;width:72px;height:19px;background:#f0f0f0;border:1px solid #b8b8b8;border-radius:3px"></div>
<div class="a" style="left:144px;top:671px;width:1px;height:17px;background:#c8c8c8"></div>
<div class="t" style="left:93px;top:673px;color:#9a9a9a">Árvore</div>
<svg class="a" style="left:148px;top:677px" width="8" height="4" viewBox="0 0 8 4" ><path d="M0 0h8l-4.0 4z" fill="#9a9a9a"/></svg>
<div class="a" style="left:391px;top:668px;width:44px;height:22px;background:linear-gradient(#f8f8f8,#e8e8e8);border:1px solid #acacac;border-radius:3px"></div>
<div class="t" style="left:399px;top:673px;">Ajuda</div>
<svg class="a" style="left:441px;top:335px" width="6" height="178" viewBox="0 0 6 178" ><rect x="1" y="0" width="1.5" height="1.5" fill="#bdbdbd"/><rect x="2" y="1" width="1" height="1" fill="#fff"/><rect x="3" y="3" width="1.5" height="1.5" fill="#bdbdbd"/><rect x="4" y="4" width="1" height="1" fill="#fff"/><rect x="1" y="6" width="1.5" height="1.5" fill="#bdbdbd"/><rect x="2" y="7" width="1" height="1" fill="#fff"/><rect x="3" y="9" width="1.5" height="1.5" fill="#bdbdbd"/><rect x="4" y="10" width="1" height="1" fill="#fff"/><rect x="1" y="12" width="1.5" height="1.5" fill="#bdbdbd"/><rect x="2" y="13" width="1" height="1" fill="#fff"/><rect x="3" y="15" width="1.5" height="1.5" fill="#bdbdbd"/><rect x="4" y="16" width="1" height="1" fill="#fff"/><rect x="1" y="18" width="1.5" height="1.5" fill="#bdbdbd"/><rect x="2" y="19" width="1" height="1" fill="#fff"/><rect x="3" y="21" width="1.5" height="1.5" fill="#bdbdbd"/><rect x="4" y="22" width="1" height="1" fill="#fff"/><rect x="1" y="24" width="1.5" height="1.5" fill="#bdbdbd"/><rect x="2" y="25" width="1" height="1" fill="#fff"/><rect x="3" y="27" width="1.5" height="1.5" fill="#bdbdbd"/><rect x="4" y="28" width="1" height="1" fill="#fff"/><rect x="1" y="30" width="1.5" height="1.5" fill="#bdbdbd"/><rect x="2" y="31" width="1" height="1" fill="#fff"/><rect x="3" y="33" width="1.5" height="1.5" fill="#bdbdbd"/><rect x="4" y="34" width="1" height="1" fill="#fff"/><rect x="1" y="36" width="1.5" height="1.5" fill="#bdbdbd"/><rect x="2" y="37" width="1" height="1" fill="#fff"/><rect x="3" y="39" width="1.5" height="1.5" fill="#bdbdbd"/><rect x="4" y="40" width="1" height="1" fill="#fff"/><rect x="1" y="42" width="1.5" height="1.5" fill="#bdbdbd"/><rect x="2" y="43" width="1" height="1" fill="#fff"/><rect x="3" y="45" width="1.5" height="1.5" fill="#bdbdbd"/><rect x="4" y="46" width="1" height="1" fill="#fff"/><rect x="1" y="48" width="1.5" height="1.5" fill="#bdbdbd"/><rect x="2" y="49" width="1" height="1" fill="#fff"/><rect x="3" y="51" width="1.5" height="1.5" fill="#bdbdbd"/><rect x="4" y="52" width="1" height="1" fill="#fff"/><rect x="1" y="54" width="1.5" height="1.5" fill="#bdbdbd"/><rect x="2" y="55" width="1" height="1" fill="#fff"/><rect x="3" y="57" width="1.5" height="1.5" fill="#bdbdbd"/><rect x="4" y="58" width="1" height="1" fill="#fff"/><rect x="1" y="60" width="1.5" height="1.5" fill="#bdbdbd"/><rect x="2" y="61" width="1" height="1" fill="#fff"/><rect x="3" y="63" width="1.5" height="1.5" fill="#bdbdbd"/><rect x="4" y="64" width="1" height="1" fill="#fff"/><rect x="1" y="66" width="1.5" height="1.5" fill="#bdbdbd"/><rect x="2" y="67" width="1" height="1" fill="#fff"/><rect x="3" y="69" width="1.5" height="1.5" fill="#bdbdbd"/><rect x="4" y="70" width="1" height="1" fill="#fff"/><rect x="1" y="72" width="1.5" height="1.5" fill="#bdbdbd"/><rect x="2" y="73" width="1" height="1" fill="#fff"/><rect x="3" y="75" width="1.5" height="1.5" fill="#bdbdbd"/><rect x="4" y="76" width="1" height="1" fill="#fff"/><rect x="1" y="78" width="1.5" height="1.5" fill="#bdbdbd"/><rect x="2" y="79" width="1" height="1" fill="#fff"/><rect x="3" y="81" width="1.5" height="1.5" fill="#bdbdbd"/><rect x="4" y="82" width="1" height="1" fill="#fff"/><rect x="1" y="84" width="1.5" height="1.5" fill="#bdbdbd"/><rect x="2" y="85" width="1" height="1" fill="#fff"/><rect x="3" y="87" width="1.5" height="1.5" fill="#bdbdbd"/><rect x="4" y="88" width="1" height="1" fill="#fff"/><rect x="1" y="90" width="1.5" height="1.5" fill="#bdbdbd"/><rect x="2" y="91" width="1" height="1" fill="#fff"/><rect x="3" y="93" width="1.5" height="1.5" fill="#bdbdbd"/><rect x="4" y="94" width="1" height="1" fill="#fff"/><rect x="1" y="96" width="1.5" height="1.5" fill="#bdbdbd"/><rect x="2" y="97" width="1" height="1" fill="#fff"/><rect x="3" y="99" width="1.5" height="1.5" fill="#bdbdbd"/><rect x="4" y="100" width="1" height="1" fill="#fff"/><rect x="1" y="102" width="1.5" height="1.5" fill="#bdbdbd"/><rect x="2" y="103" width="1" height="1" fill="#fff"/><rect x="3" y="105" width="1.5" height="1.5" fill="#bdbdbd"/><rect x="4" y="106" width="1" height="1" fill="#fff"/><rect x="1" y="108" width="1.5" height="1.5" fill="#bdbdbd"/><rect x="2" y="109" width="1" height="1" fill="#fff"/><rect x="3" y="111" width="1.5" height="1.5" fill="#bdbdbd"/><rect x="4" y="112" width="1" height="1" fill="#fff"/><rect x="1" y="114" width="1.5" height="1.5" fill="#bdbdbd"/><rect x="2" y="115" width="1" height="1" fill="#fff"/><rect x="3" y="117" width="1.5" height="1.5" fill="#bdbdbd"/><rect x="4" y="118" width="1" height="1" fill="#fff"/><rect x="1" y="120" width="1.5" height="1.5" fill="#bdbdbd"/><rect x="2" y="121" width="1" height="1" fill="#fff"/><rect x="3" y="123" width="1.5" height="1.5" fill="#bdbdbd"/><rect x="4" y="124" width="1" height="1" fill="#fff"/><rect x="1" y="126" width="1.5" height="1.5" fill="#bdbdbd"/><rect x="2" y="127" width="1" height="1" fill="#fff"/><rect x="3" y="129" width="1.5" height="1.5" fill="#bdbdbd"/><rect x="4" y="130" width="1" height="1" fill="#fff"/><rect x="1" y="132" width="1.5" height="1.5" fill="#bdbdbd"/><rect x="2" y="133" width="1" height="1" fill="#fff"/><rect x="3" y="135" width="1.5" height="1.5" fill="#bdbdbd"/><rect x="4" y="136" width="1" height="1" fill="#fff"/><rect x="1" y="138" width="1.5" height="1.5" fill="#bdbdbd"/><rect x="2" y="139" width="1" height="1" fill="#fff"/><rect x="3" y="141" width="1.5" height="1.5" fill="#bdbdbd"/><rect x="4" y="142" width="1" height="1" fill="#fff"/><rect x="1" y="144" width="1.5" height="1.5" fill="#bdbdbd"/><rect x="2" y="145" width="1" height="1" fill="#fff"/><rect x="3" y="147" width="1.5" height="1.5" fill="#bdbdbd"/><rect x="4" y="148" width="1" height="1" fill="#fff"/><rect x="1" y="150" width="1.5" height="1.5" fill="#bdbdbd"/><rect x="2" y="151" width="1" height="1" fill="#fff"/><rect x="3" y="153" width="1.5" height="1.5" fill="#bdbdbd"/><rect x="4" y="154" width="1" height="1" fill="#fff"/><rect x="1" y="156" width="1.5" height="1.5" fill="#bdbdbd"/><rect x="2" y="157" width="1" height="1" fill="#fff"/><rect x="3" y="159" width="1.5" height="1.5" fill="#bdbdbd"/><rect x="4" y="160" width="1" height="1" fill="#fff"/><rect x="1" y="162" width="1.5" height="1.5" fill="#bdbdbd"/><rect x="2" y="163" width="1" height="1" fill="#fff"/><rect x="3" y="165" width="1.5" height="1.5" fill="#bdbdbd"/><rect x="4" y="166" width="1" height="1" fill="#fff"/><rect x="1" y="168" width="1.5" height="1.5" fill="#bdbdbd"/><rect x="2" y="169" width="1" height="1" fill="#fff"/><rect x="3" y="171" width="1.5" height="1.5" fill="#bdbdbd"/><rect x="4" y="172" width="1" height="1" fill="#fff"/><rect x="1" y="174" width="1.5" height="1.5" fill="#bdbdbd"/><rect x="2" y="175" width="1" height="1" fill="#fff"/></svg>
<div class="a" style="left:446px;top:163px;width:920px;height:535px;background:#fff;border:1px solid #b4b4b4;border-radius:3px;box-shadow:inset 0 0 0 1px #cdcdcd"></div>
<svg class="a" style="left:447px;top:164px" width="918" height="533" viewBox="447 164 918 533"><path fill-rule="evenodd" d="M1007.5,178 1010.4,181.4 1015,196 1023,207 1032.7,217 1040.6,222 1044,228 1043,238 1038.8,247 1035.3,258 1033.6,272 1035,286 1038.8,297 1049.4,309.3 1060,320 1066,323.4 1063.4,328 1060.8,342.7 1060.3,356.8 1064.3,372.6 1072.2,388.4 1082.8,402.5 1098.6,412 1111,413 1126.7,415 1133.7,425 1139.9,434 1135.5,446.4 1133.7,455 1133.7,472.7 1134.6,499 1135.5,525.4 1132.9,543 1130.2,555 1124,560 1118.6,572.8 1114,587.4 1111.7,605.6 1111,629.3 1112.2,640.2 1110.4,654.8 1105.8,664 1102.2,666.7 1105.8,662 1105,651 1100.4,648.5 1093,649.4 1085.8,654 1077.6,655.8 1075.8,651 1072,644 1065.7,643 1058.4,646.6 1057.5,639.3 1060.2,638.4 1064.8,640.2 1064.8,634 1060.2,633 1053.9,634.8 1048.4,634 1042.9,635.7 1041,629.3 1034.7,630.2 1033.8,634 1023.8,639.3 1027.4,644 1023.8,653 1021.9,647.5 1016.5,644.8 1012.8,649.4 1005.5,645.7 1003.7,640.2 997.3,642 991.9,645.7 989,641 982.8,636.4 980.2,639 974.3,636.4 970.3,630.5 963.1,631.1 960.4,632.5 953.2,627.9 951.2,625.2 942.6,627.2 943.3,622.6 936,619.3 937.4,614 934.1,609.8 924.9,610.7 906.4,600.8 889.3,593.6 869.5,594.5 856.4,591.6 847.1,587 841.2,578.4 835.9,578.4 832.6,587.7 823.4,593.8 809.4,606 790,615 783,621.6 779.5,615.8 770.7,593.8 758.4,590.3 747,590 733.8,593.8 719.8,597.3 713.6,592.9 703,593.8 692.5,595.6 685.5,601.7 682,551.6 680.2,539.5 679,518.4 677.6,510.5 672.3,504.4 671.4,497.3 674.9,495.6 674.9,491.2 678.5,486 687.2,478 696.9,471 702.2,470 714.5,471.8 723.3,474.5 726.8,471.8 730.3,464.8 735.6,461.8 747.9,461.8 755.8,463 765.4,467.5 772.5,473.6 777.8,471.8 786.5,470 792.7,472.7 796.2,479 802.4,480.6 811,474.5 815.5,471.8 818.2,464.8 827,451.6 828.7,428.8 832,421.5 821.7,413 814.7,402.5 812.9,395.4 810.8,388.4 812.9,383 818.2,376 828.7,370 835.7,369 843.7,371.7 844.5,368.2 853.3,364.7 856,360.3 858.6,353.3 863,349.8 876.2,352.4 886.8,319.5 890.7,322.9 903,316 909.3,314.1 914.2,311.6 921,305.8 927.9,301.4 930.3,297 924,294 923,292.1 924,287.2 923.5,272.6 927.9,269.6 930.3,268.7 930.8,273.1 932.7,268.7 934.2,273.1 939.6,276 941,264.8 946.4,262.8 956.2,261.3 957.1,263.8 961,266.7 966.4,273.1 965,284.3 971.8,280.4 974.7,283.3 982.5,286.3 986.4,288.2 985.5,297 988.4,289.2 992.3,292.6 998.2,292.6 1004,293.1 1003.7,287.4 999.3,275.4 997.5,257.9 998,245.6 999.8,232.4 997.5,222.7 996.3,214 993.1,201.6 992.8,192.8 994,187.6 1000.2,180.5Z M939,366.5 950.2,371.9 964.2,380.5 969.7,385 976.3,377.2 977.4,373.9 988.5,366.2 997.3,359.5 1002.9,359.5 1002.9,363.9 988.5,373.9 980.8,379.4 978.5,388.3 981.9,397.1 987.4,409.3 989.6,420 989,424 986,426 972,441 960.6,456 958,457.8 949.2,449.9 943,432.3 941.3,420 939.5,411.3 936.9,399 937.2,389.5 942,377 943.5,370Z M952.3,267.7 956.2,264.8 958.1,270.6 957.1,272.1Z" fill="#f0f3c6" stroke="#9fa184" stroke-width="1"/><polygon points="1102.2,669.4 1105.8,667 1110.4,680.4 1105.8,678.5" fill="#f0f3c6" stroke="#9fa184" stroke-width="1"/><g fill="none" stroke="#9fa184" stroke-width="1"><polyline points="999.8,232.4 1032.7,217.1"/><polyline points="1012.5,227.6 1017.8,235 1016.9,252.6 1021.3,264.9 1022.1,286"/><polyline points="1003.7,287.4 1034.4,285.6"/><polyline points="928.3,300 943.5,298.5 963,289.2 971.8,280.9"/><polyline points="928.3,300.9 926.9,305.8 929.8,310.7 936.6,319.5 942.5,311.6 949.3,305.8 948.4,301.9 944.5,300.4"/><polyline points="936.6,319.5 933.2,330 926,334.8"/><polyline points="936.6,319.5 941.5,330 951.8,338.3"/><polyline points="946.4,310.2 955.2,316.5 964,325.3 958,330.4 947.5,344.8"/><polyline points="964,325.3 970.8,317.5 971.3,309.7 967.9,299.9 963.5,290.6"/><polyline points="970.8,320 1010,320"/><polyline points="992.8,320.2 992.8,344.8"/><polyline points="903.9,316 903,322.4 900.5,327"/><polyline points="997.2,294 998.2,298 1010,309.7 1037,330.4"/><polyline points="1001,293.1 1010,303.8 1038.8,331"/><polyline points="947.5,344.8 1015.1,344.8"/><polyline points="977.3,344.8 977.3,371.7"/><polyline points="987.3,344.8 987.3,363"/><polyline points="1015.1,344.8 1015.1,362"/><polyline points="1003.7,362 1034.4,363.8 1045,356.8"/><polyline points="1009.8,320.2 1012.5,334 1004.6,343.6"/><polyline points="1009.8,320.2 1007.2,307.6"/><polyline points="1010.7,342.7 1038.8,331.3 1059,319.9"/><polyline points="1038,331.3 1041.5,341 1045,356.8"/><polyline points="1042.4,344.1 1060.3,343.6"/><polyline points="1045,357.7 1046.7,365.6 1052.9,369 1063.4,384.9 1073.1,399.8"/><polyline points="1047.6,406 1073.1,399.8"/><polyline points="1034.4,363.8 1030,386.7 1025.7,404.2"/><polyline points="1030,394.6 1040.6,399 1047.6,406 1056.4,425"/><polyline points="991.4,411.3 1005.4,403.4 1026.5,405.1"/><polyline points="876.6,353.7 892.3,353.7"/><polyline points="884.5,354.3 883.8,360.8 887.7,367.3 889,375.2 887.1,376.5 890.3,377.8 891.6,381.7 898.1,386.2 905.9,385.6 908.5,381.7 908.5,376.5 905.9,372.6 900.7,364.7"/><polyline points="891,380.4 883.8,388.2 878.6,395.3 873.4,396.6 879.2,398.6 881.8,407.7 876,420.7 873.9,427.3 873.3,436.1"/><polyline points="900.7,386.2 908.5,397.3 915.7,406.4"/><polyline points="915.7,406.4 922.9,401.2 928.1,399.9 936.9,401.2"/><polyline points="915.7,406.4 905.3,414.2 898.1,423.3 895.7,433.5"/><polyline points="907.2,414.2 911.1,413.6 921.25,424.2 948.9,450.7"/><polyline points="843.7,371.7 845.4,389.5 846,405.1 842.8,412.9 833,423.3 828.7,428.8"/><polyline points="839.5,415.5 852.6,427.2 859,423.3 873.4,427.2"/><polyline points="833,423.3 839.5,436.4 844.2,449.2 853.5,457.5 869.2,467.9 871.3,465.8 880.6,463.8 886.9,464.3 895.2,462.7 892,458.5 893.6,452.3 892.6,447.1 894.2,440.8 892,438.75 873.3,436.1"/><polyline points="886.9,464.3 903.5,473.1 928.5,476.8 944.2,478.9 950.4,476.25 960,461.7 986.1,426.2"/><polyline points="873.9,427.3 860.8,423.1 855.6,424.2 853,427.3 845.2,418"/><polyline points="682,551 691.6,547.4 707.5,539.5 726.8,535.1 733.8,529.8 747.9,529.8 762,530.7 770.7,535.1 779.5,531.6 823.4,576.2 836.6,578"/><polyline points="779.5,531.6 784.8,521.9 781.3,513.1 800.6,504.4 805.9,490.3 816.1,472.7 831.4,489.4"/><polyline points="831.4,489.4 844.5,472.7 853.3,471 868.3,475.4"/><polyline points="831.4,489.4 821.7,500.8 814.7,520.2 802.4,536 801.5,544.6 803.2,549 801.5,553.4"/><polyline points="869.2,467.9 868.1,475.2 864.5,490 859.8,504.6 865,507.7 863.4,512.9 867.6,515 860.8,523.3 861.9,528.5 857.7,544.2 851.5,556.7 849.4,567.1 839.3,571 835.7,579.8"/><polyline points="860.8,523.3 867,523.3 874.4,520.2 880.6,515"/><polyline points="869.2,467.9 871.3,478.3 874.4,490 875.4,495.2 878.5,501.5 880.6,514 885.8,531.1 898.3,532.2 906.7,531.7 911.9,530.1 915,532.2 922.3,528.5 929.6,529 937.9,531.1 944.2,530.1 960,529 979.1,525.3 991.4,522.6"/><polyline points="903.5,473.1 889,490.5 879,501.5"/><polyline points="889,490.5 914,496.8 915,517.6 908.75,516 897.3,515.5 897.3,518.6 899.9,519.2 898.3,532.2"/><polyline points="928.5,476.8 929.1,490 929.6,521.25 933.2,523.3 932.7,527.5 929.6,529"/><polyline points="908.75,516 910.8,530.1"/><polyline points="950.4,476.25 953.5,475.2 958.75,484.6 957.7,490 948.3,500.8 940,522.3 938.4,529.6 937.4,531.7"/><polyline points="958.75,484.6 974.7,502.6 979.1,511.4 991.4,521"/><polyline points="953.6,475.4 974.7,457.8 986.1,465.7 1001,473.6 997.5,486.8 989.6,507 991.4,521 998.4,530.5 1019.5,537.6 1033.6,535.8 1044.1,540.2 1070.5,560.4 1098.6,564 1110.9,568.3 1117.9,572.7"/><polyline points="981.7,461.3 993.1,438.5 1005.4,435.8 1003.7,456.9 1004.6,472.7"/><polyline points="1004.6,456.9 1023,449.9 1050.3,454.3 1054.7,451.3 1133.7,453"/><polyline points="1079.3,451.6 1077.5,467.5 1071.4,481.5 1070.5,500.8 1063.4,511.4 1061.7,518.4 1049.4,529 1044.1,540.2"/><polyline points="1001.9,428.8 1044.1,422.6 1045,431.4 1056.4,431.4 1061.7,439.3 1054.7,446.4 1050.3,454.3"/><polyline points="1056.4,425 1056.4,431.4"/><polyline points="986.1,426.2 1000.2,430.5 1004,424 991.4,411.3"/><polyline points="1133.7,430.5 1128.5,439.3 1122.3,442.8 1120.6,460.4 1123.2,469.2 1133.7,471.8"/><polyline points="1130.2,449.9 1130.2,461.3"/><polyline points="937.4,531.7 945.2,541 957.7,550.4 956.7,557.7 980.8,572.7 1012.5,578 1052.9,595.6"/><polyline points="979.1,525.3 976.4,532.3 981.7,537.6 981.7,572.7"/><polyline points="1019.5,537.6 1017.8,546.4 1023.9,551.6 1024.8,559.5 1014.2,565.7 1013.4,579.8 1014.2,616.7 1005.4,639.5"/><polyline points="1070.5,560.4 1082.8,572.7 1075.7,579.8 1052.9,595.6 1040.6,611.4 1042.4,621.9 1048.5,632.5"/><polyline points="1044.1,540.2 1049.4,530.5 1061.7,520"/><polyline points="892,438.75 895.7,433.5 895.2,427.8 902.5,418"/><polyline points="1003.7,287.4 1010,287.2"/></g><polygon points="893.5,330.7 896.7,328.2 900,326.3 902.5,325.7 905.8,326.5 908,329 908.5,331.2 907.8,334 924.7,335.6 946.2,346 936.5,363.3 900.6,360.4 900.6,352.6 893.5,353.6 894.1,335" fill="#f5836c" stroke="#ff0000" stroke-width="4.2" stroke-linejoin="round"/></svg>
<div class="t" style="left:5px;top:708px;transform:scaleX(0.935)">Sem feições encontradas nesta posição.</div>
<div class="t" style="left:459px;top:708px;">Coordenada</div>
<div class="a" style="left:522px;top:703px;width:119px;height:20px;background:#fff;border:1px solid #adadad;border-radius:2px"></div>
<div class="t" style="left:539px;top:708px;">305826,9209868</div>
<svg class="a" style="left:645px;top:705px;overflow:visible" width="16" height="16" viewBox="0 0 16 16"><path d="M3 3c2-2 6-2 8 0l3 3c2 2 2 5 0 7l-2 2c-2 2-5 2-7 0L2 12C0 10 0 6 2 4z" fill="#fff" stroke="#444" stroke-width="1.4"/><path d="M4 4l5 5M9 3l3 3M5 8l4 4" stroke="#444" stroke-width="1.2"/><path d="M12 1l3-1M13 3l2 0" stroke="#444"/></svg>
<div class="t" style="left:675px;top:708px;">Escala</div>
<div class="a" style="left:709px;top:703px;width:89px;height:20px;background:#fff;border:1px solid #adadad;border-radius:2px"></div>
<div class="a" style="left:781px;top:704px;width:1px;height:18px;background:#c8c8c8"></div>
<div class="t" style="left:714px;top:708px;">1:159,330</div>
<svg class="a" style="left:785px;top:711px" width="8" height="4" viewBox="0 0 8 4" ><path d="M0 0h8l-4.0 4z" fill="#000"/></svg>
<svg class="a" style="left:803px;top:705px;overflow:visible" width="16" height="16" viewBox="0 0 16 16"><path d="M4 8V5a4 4 0 0 1 8 0v3" stroke="#6a6a6a" stroke-width="2" fill="none"/><rect x="2" y="8" width="12" height="8" rx="1" fill="#6a6a6a"/></svg>
<div class="t" style="left:833px;top:708px;">Ampliar</div>
<div class="a" style="left:871px;top:703px;width:77px;height:21px;background:#fff;border:1px solid #adadad;border-radius:2px"></div>
<div class="a" style="left:931px;top:704px;width:1px;height:19px;background:#d0d0d0"></div>
<div class="t" style="left:876px;top:708px;">100%</div>
<svg class="a" style="left:935px;top:705px" width="9" height="17" viewBox="0 0 9 17" ><path d="M0.5 5h8l-4-4z" fill="#000"/><path d="M0.5 12h8l-4 4z" fill="#000"/><path d="M0 8.5h9" stroke="#ddd"/></svg>
<div class="t" style="left:956px;top:708px;">Rotação</div>
<div class="a" style="left:1006px;top:703px;width:77px;height:21px;background:#fff;border:1px solid #adadad;border-radius:2px"></div>
<div class="a" style="left:1066px;top:704px;width:1px;height:19px;background:#d0d0d0"></div>
<div class="t" style="left:1010px;top:708px;">0.0</div>
<svg class="a" style="left:1070px;top:705px" width="9" height="17" viewBox="0 0 9 17" ><path d="M0.5 5h8l-4-4z" fill="#000"/><path d="M0.5 12h8l-4 4z" fill="#000"/><path d="M0 8.5h9" stroke="#ddd"/></svg>
<div class="a" style="left:1089px;top:707px;width:13px;height:13px;background:#fff;border:1px solid #707070"></div>
<svg class="a" style="left:1089px;top:707px" width="13" height="13" viewBox="0 0 13 13" ><path d="M3.5 3.5l6 6M9.5 3.5l-6 6" stroke="#000" stroke-width="2.2"/></svg>
<div class="t" style="left:1106px;top:708px;">Renderizar</div>
<svg class="a" style="left:1177px;top:705px;overflow:visible" width="16" height="16" viewBox="0 0 16 16"><circle cx="8" cy="8" r="7.5" fill="#222"/><path d="M2 8h12M8 2v12" stroke="#ddd" stroke-width="1.2"/><ellipse cx="8" cy="8" rx="4" ry="4" fill="none" stroke="#ddd" stroke-width="1.2"/></svg>
<div class="t" style="left:1196px;top:708px;transform:scaleX(0.895)">EPSG:31985 ('Dinâmica')</div>
<svg class="a" style="left:1335px;top:705px;overflow:visible" width="16" height="16" viewBox="0 0 16 16"><path d="M8 1.5c4.5 0 7.5 2.5 7.5 6s-3 6-7.5 6l-1 0 3 3-5-3C2.5 12.5 0.5 10.5 0.5 7.5 0.5 4 3.5 1.5 8 1.5z" fill="#5a5a5a"/><circle cx="4.5" cy="7.5" r="1.2" fill="#fff"/><circle cx="8" cy="7.5" r="1.2" fill="#fff"/><circle cx="11.5" cy="7.5" r="1.2" fill="#fff"/></svg>
<div class="a" style="left:0px;top:728px;width:1366px;height:40px;background:#0a0a0a"></div>
<svg class="a" style="left:16px;top:740px;overflow:visible" width="16" height="16" viewBox="0 0 16 16"><path d="M0 2.3l6.5-.9v6.2H0zM7.5 1.3L16 0v7.6H7.5zM0 8.5h6.5v6.2L0 13.8zM7.5 8.5H16V16l-8.5-1.2z" fill="#fff"/></svg>
<svg class="a" style="left:64px;top:740px;overflow:visible" width="16" height="16" viewBox="0 0 16 16"><circle cx="10" cy="6" r="5" fill="none" stroke="#fff" stroke-width="1.3"/><path d="M6.5 9.5L1 15" stroke="#fff" stroke-width="1.5"/></svg>
<svg class="a" style="left:110px;top:740px;overflow:visible" width="20" height="16" viewBox="0 0 20 16"><rect x="4" y="1" width="12" height="14" fill="none" stroke="#fff" stroke-width="1.2"/><path d="M2.5 3H0.5v10h2M17.5 3h2v10h-2" stroke="#fff" stroke-width="1.2" fill="none"/></svg>
<svg class="a" style="left:156px;top:737px;overflow:visible" width="22" height="22" viewBox="0 0 22 22"><path d="M1 4h8l2 2h10v15H1z" fill="#f2c94a"/><rect x="1" y="8" width="20" height="13" fill="#fbe08a"/><path d="M6 21v-5h10v5" fill="#2f8ad8"/><rect x="8" y="16" width="6" height="2.5" fill="#fbe08a"/></svg>
<svg class="a" style="left:197px;top:737px;overflow:visible" width="22" height="22" viewBox="0 0 22 22"><circle cx="11" cy="11" r="11" fill="#1a3a60"/><circle cx="14.5" cy="8.5" r="3.5" fill="none" stroke="#ddd" stroke-width="1.5"/><path d="M1 12l8 3" stroke="#ddd" stroke-width="2.5"/><circle cx="9" cy="15" r="2.5" fill="#ddd"/></svg>
<svg class="a" style="left:239px;top:737px;overflow:visible" width="18" height="22" viewBox="0 0 18 22"><circle cx="9" cy="11" r="7" fill="none" stroke="#f05a22" stroke-width="4"/><path d="M12 2l3-2" stroke="#f05a22" stroke-width="2"/></svg>
<svg class="a" style="left:279px;top:737px;overflow:visible" width="20" height="22" viewBox="0 0 20 22"><rect x="1" y="1" width="18" height="19" fill="#5a9ad8" stroke="#a8c8e8"/><circle cx="10" cy="11" r="6" fill="#f59a1a"/><path d="M8 8v6l5-3z" fill="#fff"/></svg>
<svg class="a" style="left:320px;top:737px;overflow:visible" width="22" height="22" viewBox="0 0 22 22"><circle cx="10" cy="12" r="9" fill="#f7c500"/><circle cx="10" cy="12" r="6.5" fill="#fff"/><path d="M6 11l3 4 6-9" stroke="#222" stroke-width="2.2" fill="none"/><path d="M17 2l4-2" stroke="#f7c500" stroke-width="1"/></svg>
<svg class="a" style="left:360px;top:738px;overflow:visible" width="22" height="20" viewBox="0 0 22 20"><path d="M2 10c0-6 4-8 9-8s9 2 9 8c0 5-4 8-9 8s-9-3-9-8z" fill="#f07830"/><path d="M6 6v6M9 4v7M12 4v7M15 6v6" stroke="#7a2a08" stroke-width="1.2"/></svg>
<svg class="a" style="left:401px;top:736px;overflow:visible" width="24" height="24" viewBox="0 0 24 24"><rect x="0" y="0" width="24" height="24" rx="2" fill="#2d6cc0"/><rect x="2" y="2" width="20" height="20" fill="#5a9ae0"/><ellipse cx="12" cy="14" rx="3" ry="4" fill="#111"/><circle cx="12" cy="9" r="2" fill="#111"/><path d="M9 12L3 7M9 14L2 14M9 16l-5 5M15 12l6-5M15 14h7M15 16l5 5" stroke="#111" stroke-width="1"/></svg>
<svg class="a" style="left:443px;top:737px;overflow:visible" width="22" height="22" viewBox="0 0 22 22"><circle cx="11" cy="11" r="11" fill="#db4437"/><path d="M11 11L1.5 16.5A11 11 0 0 0 11 22z" fill="#0f9d58"/><path d="M11 11L1.5 16.5A11 11 0 0 1 1.5 5.5z" fill="#0f9d58"/><path d="M11 11l9.5 5.5A11 11 0 0 1 11 22z" fill="#f4b400"/><path d="M11 11l9.5-5.5A11 11 0 0 1 20.5 16.5z" fill="#f4b400"/><circle cx="11" cy="11" r="5" fill="#fff"/><circle cx="11" cy="11" r="3.8" fill="#4285f4"/></svg>
<svg class="a" style="left:483px;top:737px;overflow:visible" width="22" height="22" viewBox="0 0 22 22"><circle cx="11" cy="11" r="11" fill="#e66000"/><circle cx="11" cy="10" r="7" fill="#2a5aa8"/><path d="M2 8c2 6 8 10 14 8s4-8 2-10c0 4-4 6-7 5S6 8 8 4C4 4 2 6 2 8z" fill="#f7a020"/></svg>
<svg class="a" style="left:524px;top:737px;overflow:visible" width="23" height="23" viewBox="0 0 23 23"><rect x="0" y="0" width="23" height="23" fill="#fff"/><rect x="1.0" y="1.0" width="4.2" height="4.2" fill="#f00"/><rect x="5.2" y="1.0" width="4.2" height="4.2" fill="#ff0"/><rect x="9.4" y="1.0" width="4.2" height="4.2" fill="#0cf"/><rect x="13.600000000000001" y="1.0" width="4.2" height="4.2" fill="#ff0"/><rect x="17.8" y="1.0" width="4.2" height="4.2" fill="#f00"/><rect x="1.0" y="5.2" width="4.2" height="4.2" fill="#0f0"/><rect x="5.2" y="5.2" width="4.2" height="4.2" fill="#0f0"/><rect x="9.4" y="5.2" width="4.2" height="4.2" fill="#ccc"/><rect x="13.600000000000001" y="5.2" width="4.2" height="4.2" fill="#ccc"/><rect x="17.8" y="5.2" width="4.2" height="4.2" fill="#ccc"/><rect x="1.0" y="9.4" width="4.2" height="4.2" fill="#0f0"/><rect x="5.2" y="9.4" width="4.2" height="4.2" fill="#0f0"/><rect x="9.4" y="9.4" width="4.2" height="4.2" fill="#f0f"/><rect x="13.600000000000001" y="9.4" width="4.2" height="4.2" fill="#00f"/><rect x="17.8" y="9.4" width="4.2" height="4.2" fill="#ccc"/><rect x="1.0" y="13.600000000000001" width="4.2" height="4.2" fill="#00f"/><rect x="5.2" y="13.600000000000001" width="4.2" height="4.2" fill="#f0f"/><rect x="9.4" y="13.600000000000001" width="4.2" height="4.2" fill="#f0f"/><rect x="13.600000000000001" y="13.600000000000001" width="4.2" height="4.2" fill="#f00"/><rect x="17.8" y="13.600000000000001" width="4.2" height="4.2" fill="#ff0"/><rect x="1.0" y="17.8" width="4.2" height="4.2" fill="#ccc"/><rect x="5.2" y="17.8" width="4.2" height="4.2" fill="#ff0"/><rect x="9.4" y="17.8" width="4.2" height="4.2" fill="#f00"/><rect x="13.600000000000001" y="17.8" width="4.2" height="4.2" fill="#0f0"/><rect x="17.8" y="17.8" width="4.2" height="4.2" fill="#0f0"/><rect x="5.2" y="5.2" width="12.6" height="4.2" fill="#ccc"/><rect x="9.4" y="9.4" width="4.2" height="12.6" fill="#ccc"/></svg>
<svg class="a" style="left:565px;top:737px;overflow:visible" width="20" height="22" viewBox="0 0 20 22"><path d="M11 0L20 16H2z" fill="#8aa8c8" opacity="0.7"/><text x="1" y="13" font-family="Liberation Sans" font-weight="bold" font-size="12" fill="#b8d040">Ds</text><text x="1" y="21" font-family="Liberation Sans" font-weight="bold" font-size="7" fill="#fff">2017</text></svg>
<svg class="a" style="left:605px;top:737px;overflow:visible" width="22" height="22" viewBox="0 0 22 22"><path d="M2 6l10-5 10 5v11l-10 5-10-5z" fill="#e03030"/><path d="M7 8l5-3 5 3v3l-5 3-5-3z" fill="#fff"/><path d="M9 9l3-2 3 2v2l-3 2-3-2z" fill="#e03030"/></svg>
<svg class="a" style="left:644px;top:737px;overflow:visible" width="22" height="22" viewBox="0 0 22 22"><circle cx="11" cy="11" r="11" fill="#c8ccd0"/><path d="M0 9c6-3 14-3 22 2M1 14c6-4 14-3 21 0" stroke="#6a7078" stroke-width="2" fill="none"/><rect x="6" y="15" width="12" height="7" rx="1" fill="#4a4e54"/><text x="12" y="21" font-family="Liberation Sans" font-size="5.5" fill="#fff" text-anchor="middle">Pro</text></svg>
<svg class="a" style="left:684px;top:737px;overflow:visible" width="22" height="22" viewBox="0 0 22 22"><path fill-rule="evenodd" d="M10.5 1.5c-4.5 0-8 3.8-8 8.7s3.5 8.7 8 8.7 8-3.8 8-8.7-3.5-8.7-8-8.7zM10.8 3.2c-1.6 0-2.6 3-2.6 7s1 7 2.6 7 2.6-3 2.6-7-1-7-2.6-7z" fill="#e2e676"/><path d="M12 17.5c1.5 2.5 4 3.8 6.5 3.5l.3-1c-2 .2-3.5-.8-4.5-2.8z" fill="#e2e676"/><path d="M4.5 6c.8-2 2.5-3.5 4.5-4" stroke="#f6f8c0" stroke-width="1.3" fill="none"/><path d="M3 18L16 3.5" stroke="#1c8c1c" stroke-width="2.2"/><path d="M19.5 0L12.5 2.5 17 7z" fill="#1c8c1c"/><path d="M1 20.5l4.5-1.2-2.8-2.6z" fill="#135a13"/></svg>
<svg class="a" style="left:725px;top:738px;overflow:visible" width="22" height="20" viewBox="0 0 22 20"><rect x="0" y="0" width="22" height="20" fill="#0c1a3a" stroke="#31a8ff" stroke-width="1.2"/><text x="11" y="14.5" font-family="Liberation Sans" font-weight="bold" font-size="11" fill="#31a8ff" text-anchor="middle">Ps</text></svg>
<svg class="a" style="left:764px;top:737px;overflow:visible" width="22" height="22" viewBox="0 0 22 22"><path d="M4 3h14l2 17H6z" fill="#e8f0f8"/><path d="M1 6l15-4 5 16-15 4z" fill="#88b8e0"/><path d="M3 8l12-3M4 11l12-3M5 14l12-3" stroke="#fff" stroke-width="0.8"/></svg>
<svg class="a" style="left:805px;top:737px;overflow:visible" width="22" height="22" viewBox="0 0 22 22"><rect x="8" y="2" width="14" height="19" fill="#fff"/><path d="M11 6h9M11 9h9M11 12h9M11 15h9M11 18h9" stroke="#2b579a" stroke-width="1"/><path d="M0 3l13-3v22L0 19z" fill="#2b579a"/><text x="6.5" y="15" font-family="Liberation Sans" font-weight="bold" font-size="9" fill="#fff" text-anchor="middle">W</text></svg>
<svg class="a" style="left:845px;top:737px;overflow:visible" width="22" height="22" viewBox="0 0 22 22"><rect x="8" y="2" width="14" height="19" fill="#fff"/><circle cx="16" cy="9" r="4" fill="#d24726"/><path d="M11 15h9M11 18h9" stroke="#d24726"/><path d="M0 3l13-3v22L0 19z" fill="#d24726"/><text x="6.5" y="15" font-family="Liberation Sans" font-weight="bold" font-size="9" fill="#fff" text-anchor="middle">P</text></svg>
<svg class="a" style="left:885px;top:737px;overflow:visible" width="22" height="22" viewBox="0 0 22 22"><rect x="8" y="2" width="14" height="19" fill="#fff"/><path d="M11 6h9M11 9h9M11 12h9M11 15h9M11 18h9M15 4v16" stroke="#217346" stroke-width="1"/><path d="M0 3l13-3v22L0 19z" fill="#217346"/><text x="6.5" y="15" font-family="Liberation Sans" font-weight="bold" font-size="9" fill="#fff" text-anchor="middle">X</text></svg>
<svg class="a" style="left:924px;top:736px;overflow:visible" width="25" height="25" viewBox="0 0 25 25"><rect x="0" y="0" width="25" height="25" rx="3" fill="#fff"/><path d="M7 5l5 3-5 3-5-3zM18 5l5 3-5 3-5-3zM7 11l5 3-5 3-5-3zM18 11l5 3-5 3-5-3zM12.5 15l4.5 3-4.5 3-4.5-3z" fill="#0061fe"/></svg>
<svg class="a" style="left:964px;top:737px;overflow:visible" width="21" height="22" viewBox="0 0 21 22"><rect x="0" y="0" width="21" height="22" rx="3" fill="#0e8ee9"/><ellipse cx="10.5" cy="11" rx="8" ry="8" fill="#fff"/><ellipse cx="10.5" cy="11" rx="6.5" ry="6.5" fill="#0e8ee9"/><path d="M3 11l4-3v2h7V8l4 3-4 3v-2H7v2z" fill="#fff"/></svg>
<svg class="a" style="left:1005px;top:737px;overflow:visible" width="22" height="22" viewBox="0 0 22 22"><circle cx="11" cy="11" r="11" fill="#db4437"/><path d="M11 11L1.5 16.5A11 11 0 0 0 11 22z" fill="#0f9d58"/><path d="M11 11L1.5 16.5A11 11 0 0 1 1.5 5.5z" fill="#0f9d58"/><path d="M11 11l9.5 5.5A11 11 0 0 1 11 22z" fill="#f4b400"/><path d="M11 11l9.5-5.5A11 11 0 0 1 20.5 16.5z" fill="#f4b400"/><circle cx="11" cy="11" r="5" fill="#fff"/><circle cx="11" cy="11" r="3.8" fill="#4285f4"/></svg>
<div class="a" style="left:999px;top:766px;width:38px;height:2px;background:#9a9a9a"></div>
<div class="a" style="left:1037px;top:728px;width:39px;height:40px;background:#3c3c3c"></div>
<div class="a" style="left:1037px;top:766px;width:39px;height:2px;background:#b4b4b4"></div>
<svg class="a" style="left:1045px;top:737px;overflow:visible" width="22" height="22" viewBox="0 0 22 22"><path fill-rule="evenodd" d="M10.5 1.5c-4.5 0-8 3.8-8 8.7s3.5 8.7 8 8.7 8-3.8 8-8.7-3.5-8.7-8-8.7zM10.8 3.2c-1.6 0-2.6 3-2.6 7s1 7 2.6 7 2.6-3 2.6-7-1-7-2.6-7z" fill="#e2e676"/><path d="M12 17.5c1.5 2.5 4 3.8 6.5 3.5l.3-1c-2 .2-3.5-.8-4.5-2.8z" fill="#e2e676"/><path d="M4.5 6c.8-2 2.5-3.5 4.5-4" stroke="#f6f8c0" stroke-width="1.3" fill="none"/><path d="M3 18L16 3.5" stroke="#1c8c1c" stroke-width="2.2"/><path d="M19.5 0L12.5 2.5 17 7z" fill="#1c8c1c"/><path d="M1 20.5l4.5-1.2-2.8-2.6z" fill="#135a13"/></svg>
<svg class="a" style="left:1088px;top:742px;overflow:visible" width="14" height="12" viewBox="0 0 14 12"><path d="M1 9l6-6 6 6" stroke="#fff" stroke-width="1.3" fill="none"/></svg>
<svg class="a" style="left:1119px;top:743px;overflow:visible" width="16" height="11" viewBox="0 0 16 11"><rect x="0.5" y="1.5" width="14" height="8" fill="none" stroke="#fff" stroke-width="1.2"/><rect x="2" y="3" width="6" height="5" fill="#fff"/><rect x="15" y="4" width="1.5" height="3" fill="#fff"/></svg>
<svg class="a" style="left:1153px;top:741px;overflow:visible" width="14" height="14" viewBox="0 0 14 14"><path d="M1 13a12 12 0 0 1 12-12M3.5 13a9.5 9.5 0 0 1 9.5-9.5M6 13a7 7 0 0 1 7-7M8.5 13a4.5 4.5 0 0 1 4.5-4.5" stroke="#fff" stroke-width="1.1" fill="none"/><circle cx="11.5" cy="11.5" r="1.5" fill="#fff"/></svg>
<svg class="a" style="left:1182px;top:739px;overflow:visible" width="18" height="18" viewBox="0 0 18 18"><path d="M1 6h3l4-4v14l-4-4H1z" fill="none" stroke="#fff" stroke-width="1.2"/><path d="M11 5c1.5 1.5 1.5 6.5 0 8M13.5 3c2.5 2.5 2.5 10 0 12M16 1c3.5 3.5 3.5 13 0 16" stroke="#fff" stroke-width="1.1" fill="none"/></svg>
<div class="t" style="left:1213px;top:733px;color:#fff;font-size:12px;line-height:14px">POR</div>
<div class="t" style="left:1214px;top:750px;color:#fff;font-size:12px;line-height:14px">PTB</div>
<div class="t" style="left:1264px;top:733px;color:#fff;font-size:12px;line-height:14px">15:10</div>
<div class="t" style="left:1248px;top:750px;color:#fff;font-size:12px;line-height:14px;transform:scaleX(0.97)">25/02/2018</div>
<svg class="a" style="left:1324px;top:739px" width="18" height="18" viewBox="0 0 18 18" ><path d="M1.5 1.5H16.5V13H10.5L9 14.8 7.5 13H1.5Z" fill="none" stroke="#fff" stroke-width="1.2"/></svg>
<div class="a" style="left:1361px;top:728px;width:1px;height:40px;background:#6a6a6a"></div>
</body></html>
